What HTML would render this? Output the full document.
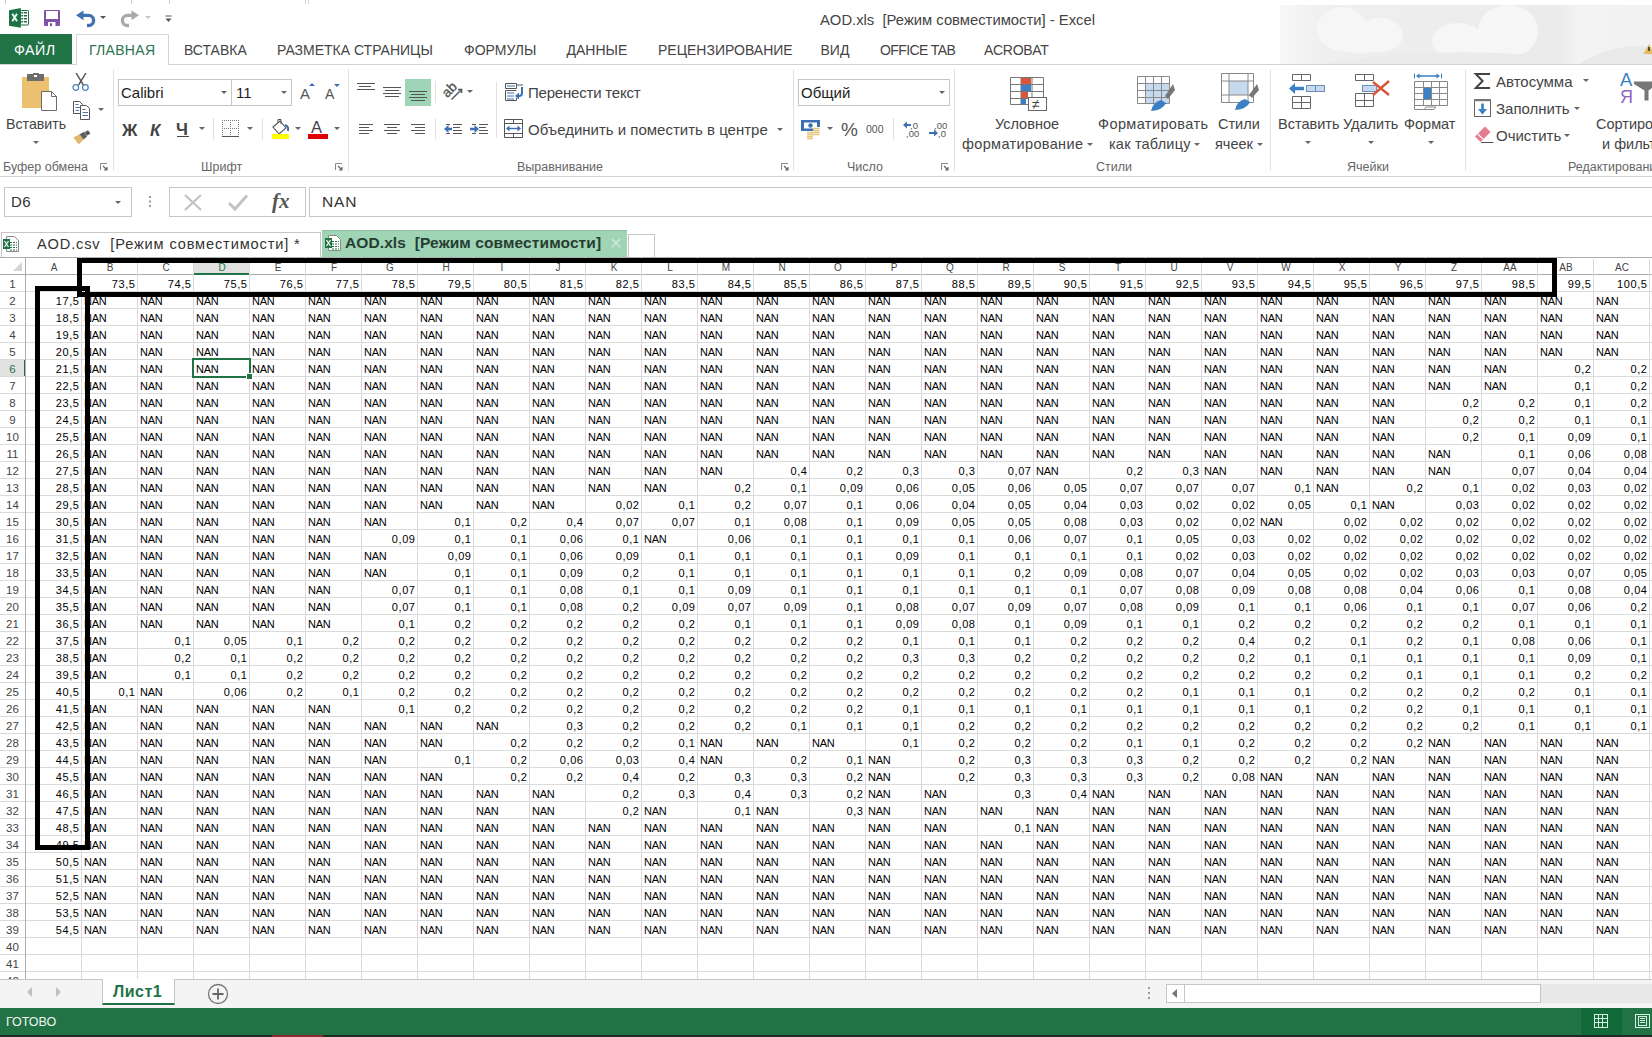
<!DOCTYPE html><html><head><meta charset="utf-8"><style>
*{box-sizing:border-box}
html,body{margin:0;padding:0}
body{width:1652px;height:1037px;overflow:hidden;position:relative;background:#fff;font-family:"Liberation Sans", sans-serif;color:#000}
.a{position:absolute}
.t{position:absolute;white-space:pre;line-height:1}
#grid{position:absolute;left:0;top:257px;width:1652px;height:722px;overflow:hidden;background:#fff}
.hl{position:absolute;left:0;width:1652px;height:1px;background:#dadada}
.vl{position:absolute;top:0;width:1px;background:#dadada}
.c{position:absolute;height:17px;font-size:11px;line-height:19px;white-space:pre}
.n{text-align:right;width:53.6px;letter-spacing:0.6px}
.s{text-align:left;letter-spacing:-0.3px}
.ch{position:absolute;top:2px;height:17px;width:56px;text-align:center;font-size:10px;line-height:17px;color:#444}
.rh{position:absolute;left:0;width:25px;text-align:center;font-size:11.5px;line-height:19px;color:#444}

.lbl{position:absolute;white-space:pre;line-height:1;color:#444;font-size:14.5px}
.glbl{position:absolute;white-space:pre;line-height:1;color:#666;font-size:12.5px}
.tab{position:absolute;white-space:pre;line-height:1;color:#444;font-size:14px;top:43px}
.sep{position:absolute;width:1px;background:#e1e1e1}
.dd{position:absolute;width:0;height:0;border-left:3px solid transparent;border-right:3px solid transparent;border-top:3px solid #666}
.box{position:absolute;border:1px solid #c6c6c6;background:#fff}
svg{position:absolute;overflow:visible}
</style></head><body>
<svg style="left:1280px;top:5px" width="372" height="59">
<defs><linearGradient id="pg" x1="0" x2="1"><stop offset="0" stop-color="#f7f7f7"/><stop offset="0.12" stop-color="#efefef"/><stop offset="0.75" stop-color="#ebebeb"/><stop offset="0.8" stop-color="#f3f3f3"/><stop offset="1" stop-color="#f2f2f2"/></linearGradient></defs>
<rect x="0" y="0" width="372" height="59" fill="url(#pg)"/>
<ellipse cx="62" cy="24" rx="25" ry="22" fill="#f6f6f6"/><ellipse cx="100" cy="30" rx="23" ry="17" fill="#f6f6f6"/><ellipse cx="80" cy="38" rx="30" ry="10" fill="#f6f6f6"/>
<ellipse cx="178" cy="36" rx="26" ry="18" fill="#f6f6f6"/><ellipse cx="228" cy="26" rx="30" ry="26" fill="#f7f7f7"/><ellipse cx="200" cy="44" rx="35" ry="10" fill="#f6f6f6"/>
<path d="M40 59 Q150 40 280 52 L280 59Z" fill="#ebebeb"/>
<path d="M300 59 Q330 38 372 42 L372 59Z" fill="#e9e9e9"/>
</svg>
<div class="a" style="left:5px;top:0;width:1px;height:4px;background:#d0d0d0"></div><div class="a" style="left:131px;top:0;width:1px;height:4px;background:#d0d0d0"></div><div class="a" style="left:169px;top:0;width:1px;height:4px;background:#d0d0d0"></div><div class="a" style="left:305px;top:0;width:1px;height:4px;background:#d0d0d0"></div><div class="a" style="left:308px;top:0;width:1px;height:4px;background:#d0d0d0"></div>
<svg style="left:1643px;top:43px" width="12" height="12"><path d="M6 1 L11.5 11 H0.5Z" fill="#e8b85c"/><rect x="5.2" y="4" width="1.6" height="4" fill="#333"/></svg>
<svg style="left:9px;top:8px" width="21" height="21">
<rect x="11.5" y="2.5" width="8" height="14.5" rx="0.8" fill="#fff" stroke="#1e6b40" stroke-width="1"/>
<g fill="#1e6b40"><rect x="12.3" y="4" width="1.7" height="1.5"/><rect x="14.8" y="4" width="3.2" height="1.5"/>
<rect x="12.3" y="7" width="1.7" height="1.5"/><rect x="14.8" y="7" width="3.2" height="1.5"/>
<rect x="12.3" y="10" width="1.7" height="1.5"/><rect x="14.8" y="10" width="3.2" height="1.5"/>
<rect x="12.3" y="13" width="1.7" height="1.5"/><rect x="14.8" y="13" width="3.2" height="1.5"/></g>
<path d="M0 2.2 L11.8 0 V19.8 L0 17.8Z" fill="#1e7145"/>
<path d="M3.3 5.8 L8 13.3 M8 5.8 L3.3 13.3" stroke="#e8f8ee" stroke-width="2"/>
</svg>
<svg style="left:44px;top:10px" width="16" height="16">
<rect x="0" y="0" width="16" height="16" rx="1.2" fill="#8150a8"/>
<rect x="2" y="1" width="12" height="8" fill="#fff"/>
<rect x="4" y="12" width="7.5" height="4" rx="0.5" fill="#fff"/><rect x="6" y="13.2" width="2" height="3" fill="#8150a8"/>
</svg>
<svg style="left:76px;top:10px" width="20" height="18">
<path d="M6 5.3 H12.5 A5 5 0 0 1 12.5 15.5 H11" fill="none" stroke="#3f72b0" stroke-width="3.3"/>
<path d="M0 5.3 L7.5 0.5 V10.3Z" fill="#3f72b0"/>
</svg>
<div class="dd" style="left:100px;top:16px;border-top-color:#555"></div>
<svg style="left:121px;top:10px" width="20" height="18">
<path d="M12 5.3 H6.5 A5 5 0 0 0 6.5 15.5 H8" fill="none" stroke="#a9a9a9" stroke-width="3.3"/>
<path d="M18 5.3 L10.5 0.5 V10.3Z" fill="#a9a9a9"/>
</svg>
<div class="dd" style="left:145px;top:16px;border-top-color:#c4c4c4"></div>
<svg style="left:165px;top:15px" width="7" height="8"><path d="M0.5 1H6.5" stroke="#555" stroke-width="1"/><path d="M0.5 3.5 L6.5 3.5 L3.5 7Z" fill="#555"/></svg>
<div class="lbl" style="left:820px;top:13px;font-size:14.8px;color:#444">AOD.xls  [Режим совместимости] - Excel</div>
<div class="a" style="left:0;top:34px;width:72px;height:31px;background:#217346"></div>
<div class="tab" style="left:14px;color:#fff;font-size:14.3px;letter-spacing:0.5px">ФАЙЛ</div>
<div class="a" style="left:0;top:64px;width:1652px;height:1px;background:#d4d4d4"></div>
<div class="a" style="left:76px;top:34px;width:93px;height:31px;background:#fff;border:1px solid #d4d4d4;border-bottom:none"></div>
<div class="tab" style="left:89px;color:#2b7450;letter-spacing:0.3px">ГЛАВНАЯ</div>
<div class="tab" style="left:184px">ВСТАВКА</div>
<div class="tab" style="left:277px">РАЗМЕТКА СТРАНИЦЫ</div>
<div class="tab" style="left:464px">ФОРМУЛЫ</div>
<div class="tab" style="left:566.5px">ДАННЫЕ</div>
<div class="tab" style="left:658px">РЕЦЕНЗИРОВАНИЕ</div>
<div class="tab" style="left:820.5px">ВИД</div>
<div class="tab" style="left:880px;color:#444;letter-spacing:-0.6px">OFFICE TAB</div>
<div class="tab" style="left:984px;color:#444;letter-spacing:-0.3px">ACROBAT</div>
<div class="a" style="left:0;top:176px;width:1652px;height:1px;background:#d4d4d4"></div>
<div class="sep" style="left:113px;top:69px;height:102px"></div>
<div class="sep" style="left:348px;top:69px;height:102px"></div>
<div class="sep" style="left:496px;top:82px;height:56px"></div>
<div class="sep" style="left:793px;top:69px;height:102px"></div>
<div class="sep" style="left:954px;top:69px;height:102px"></div>
<div class="sep" style="left:1270px;top:69px;height:102px"></div>
<div class="sep" style="left:1465px;top:69px;height:102px"></div>
<div class="sep" style="left:213px;top:118px;height:22px"></div>
<div class="sep" style="left:262px;top:118px;height:22px"></div>
<div class="sep" style="left:435px;top:81px;height:22px"></div>
<div class="sep" style="left:435px;top:118px;height:21px"></div>
<div class="sep" style="left:893px;top:118px;height:22px"></div>
<svg style="left:22px;top:73px" width="36" height="38">
<rect x="0" y="4" width="27" height="31" fill="#ebc170"/>
<rect x="5" y="1" width="17" height="7" fill="#6d6d6d"/><rect x="11" y="0" width="6" height="3" fill="#6d6d6d"/><rect x="12" y="2" width="3" height="2" fill="#fff"/>
<path d="M19.5 18.5 H29.5 L34.5 23.5 V37.5 H19.5Z" fill="#fff" stroke="#6d6d6d"/>
<path d="M29.5 18.5 V23.5 H34.5" fill="none" stroke="#6d6d6d"/>
</svg>
<div class="lbl" style="left:6px;top:117px;font-size:14.2px">Вставить</div>
<div class="dd" style="left:33px;top:141px;border-top-color:#666"></div>
<svg style="left:72px;top:73px" width="18" height="19">
<path d="M3.3 0 L5 0 L12 11.6 L10.8 12.6Z" fill="#5a5a5a"/><path d="M14.7 0 L13 0 L6 11.6 L7.2 12.6Z" fill="#5a5a5a"/>
<circle cx="3.8" cy="14.5" r="2.8" fill="#fff" stroke="#4a7ebb" stroke-width="1.2"/>
<circle cx="13.4" cy="14.5" r="2.8" fill="#fff" stroke="#4a7ebb" stroke-width="1.2"/>
</svg>
<svg style="left:73px;top:101px" width="18" height="19">
<path d="M0.5 0.5 H6.5 L9.5 3.5 V12.5 H0.5Z" fill="#fff" stroke="#555"/>
<path d="M2.5 3.5H5.5 M2.5 6.5H7.5 M2.5 9.5H6" stroke="#4f74a6" stroke-width="1"/>
<path d="M7.5 4.5 H13.5 L16.5 7.5 V18.5 H7.5Z" fill="#fff" stroke="#555"/>
<path d="M9.5 8.5H12.5 M9.5 11.5H15 M9.5 14.5H15" stroke="#4f74a6" stroke-width="1"/>
</svg>
<div class="dd" style="left:98px;top:108px;border-top-color:#666"></div>
<svg style="left:73px;top:130px" width="19" height="16">
<path d="M0.3 7.4 L6.5 4.2 L10.6 9.6 L5.8 14.6Z" fill="#e2b66e"/>
<path d="M6.5 4.2 L11.3 1.8 L14 6.6 L10.6 9.6Z" fill="#606060"/>
<path d="M11.8 2.2 L15 0.3 L17.4 3.6 L14 5.8Z" fill="#555"/>
</svg>
<div class="glbl" style="left:3px;top:161px">Буфер обмена</div>
<svg style="left:100px;top:163px" width="8" height="8"><path d="M0.5 7 V0.5 H7" fill="none" stroke="#888" stroke-width="1"/><path d="M3 3 L7 7 M7 4 V7 H4" fill="none" stroke="#666" stroke-width="1.2"/></svg>
<div class="box" style="left:118px;top:79px;width:114px;height:27px"></div>
<div class="box" style="left:231px;top:79px;width:61px;height:27px"></div>
<div class="lbl" style="left:121px;top:85px;font-size:15px;color:#222">Calibri</div>
<div class="lbl" style="left:236px;top:85px;font-size:15px;color:#222">11</div>
<div class="dd" style="left:221px;top:91px;border-top-color:#666"></div>
<div class="dd" style="left:281px;top:91px;border-top-color:#666"></div>
<div class="lbl" style="left:300px;top:86px;font-size:15px;color:#555">A</div>
<svg style="left:309px;top:83px" width="6" height="4"><path d="M0 3 L3 0 L6 3Z" fill="#3d6fb4"/></svg>
<div class="lbl" style="left:325px;top:87px;font-size:14px;color:#555">A</div>
<svg style="left:334px;top:84px" width="6" height="4"><path d="M0 0 L3 3 L6 0Z" fill="#3d6fb4"/></svg>
<div class="lbl" style="left:122px;top:122px;font-size:17px;font-weight:bold;color:#444">Ж</div>
<div class="lbl" style="left:150px;top:122px;font-size:17px;font-weight:bold;font-style:italic;color:#444">К</div>
<div class="lbl" style="left:176px;top:121px;font-size:17px;font-weight:bold;color:#444">Ч</div>
<div class="a" style="left:177px;top:136px;width:12px;height:1px;background:#444"></div>
<div class="dd" style="left:199px;top:127px;border-top-color:#666"></div>
<svg style="left:222px;top:120px" width="18" height="17"><g fill="#777"><rect x="0" y="0" width="1" height="1"/><rect x="0" y="8" width="1" height="1"/><rect x="2" y="0" width="1" height="1"/><rect x="2" y="8" width="1" height="1"/><rect x="4" y="0" width="1" height="1"/><rect x="4" y="8" width="1" height="1"/><rect x="6" y="0" width="1" height="1"/><rect x="6" y="8" width="1" height="1"/><rect x="8" y="0" width="1" height="1"/><rect x="8" y="8" width="1" height="1"/><rect x="10" y="0" width="1" height="1"/><rect x="10" y="8" width="1" height="1"/><rect x="12" y="0" width="1" height="1"/><rect x="12" y="8" width="1" height="1"/><rect x="14" y="0" width="1" height="1"/><rect x="14" y="8" width="1" height="1"/><rect x="16" y="0" width="1" height="1"/><rect x="16" y="8" width="1" height="1"/><rect x="0" y="0" width="1" height="1"/><rect x="8" y="0" width="1" height="1"/><rect x="16" y="0" width="1" height="1"/><rect x="0" y="2" width="1" height="1"/><rect x="8" y="2" width="1" height="1"/><rect x="16" y="2" width="1" height="1"/><rect x="0" y="4" width="1" height="1"/><rect x="8" y="4" width="1" height="1"/><rect x="16" y="4" width="1" height="1"/><rect x="0" y="6" width="1" height="1"/><rect x="8" y="6" width="1" height="1"/><rect x="16" y="6" width="1" height="1"/><rect x="0" y="8" width="1" height="1"/><rect x="8" y="8" width="1" height="1"/><rect x="16" y="8" width="1" height="1"/><rect x="0" y="10" width="1" height="1"/><rect x="8" y="10" width="1" height="1"/><rect x="16" y="10" width="1" height="1"/><rect x="0" y="12" width="1" height="1"/><rect x="8" y="12" width="1" height="1"/><rect x="16" y="12" width="1" height="1"/><rect x="0" y="14" width="1" height="1"/><rect x="8" y="14" width="1" height="1"/><rect x="16" y="14" width="1" height="1"/></g><rect x="0" y="16" width="17" height="1" fill="#555"/></svg>
<div class="dd" style="left:247px;top:127px;border-top-color:#666"></div>
<svg style="left:272px;top:119px" width="18" height="20">
<path d="M1 8 L8 2 L14 9 L7 15Z" fill="#fff" stroke="#555" stroke-width="1.1"/>
<path d="M6 4 V0.5 H9 V5" fill="none" stroke="#555" stroke-width="1"/>
<path d="M13 6 Q17 7 16 12" fill="none" stroke="#3d6fb4" stroke-width="2"/>
<rect x="0" y="15" width="17" height="5" fill="#ffff00"/>
</svg>
<div class="dd" style="left:295px;top:127px;border-top-color:#666"></div>
<div class="lbl" style="left:311px;top:119px;font-size:16.5px;color:#444">A</div>
<div class="a" style="left:308px;top:134px;width:20px;height:5px;background:#e00000"></div>
<div class="dd" style="left:334px;top:127px;border-top-color:#666"></div>
<div class="glbl" style="left:201px;top:161px">Шрифт</div>
<svg style="left:335px;top:163px" width="8" height="8"><path d="M0.5 7 V0.5 H7" fill="none" stroke="#888" stroke-width="1"/><path d="M3 3 L7 7 M7 4 V7 H4" fill="none" stroke="#666" stroke-width="1.2"/></svg>
<svg style="left:357px;top:83px" width="22" height="20"><rect x="0" y="0" width="18" height="1" fill="#555"/><rect x="2" y="3" width="12" height="1" fill="#555"/><rect x="0" y="6" width="18" height="1" fill="#555"/></svg>
<svg style="left:383px;top:87px" width="22" height="20"><rect x="0" y="0" width="18" height="1" fill="#555"/><rect x="2" y="3" width="14" height="1" fill="#555"/><rect x="0" y="6" width="18" height="1" fill="#555"/><rect x="2" y="9" width="14" height="1" fill="#555"/></svg>
<div class="a" style="left:405px;top:79px;width:26px;height:27px;background:#9fd5b7"></div>
<svg style="left:409px;top:91px" width="22" height="20"><rect x="0" y="0" width="18" height="1" fill="#555"/><rect x="2" y="3" width="14" height="1" fill="#555"/><rect x="0" y="6" width="18" height="1" fill="#555"/><rect x="2" y="9" width="14" height="1" fill="#555"/></svg>
<svg style="left:440px;top:80px" width="26" height="22">
<text x="2" y="14.5" transform="rotate(-45 9 10)" font-family="Liberation Sans" font-size="13.5" fill="#555" stroke="#555" stroke-width="0.35">ab</text>
<path d="M11.5 19.5 L21 10" fill="none" stroke="#555" stroke-width="1.5"/>
<path d="M18 9.5 H21.5 V13" fill="none" stroke="#555" stroke-width="1.6"/>
</svg>
<div class="dd" style="left:467px;top:90px;border-top-color:#666"></div>
<svg style="left:359px;top:124px" width="22" height="20"><rect x="0" y="0" width="14" height="1" fill="#555"/><rect x="0" y="3" width="10" height="1" fill="#555"/><rect x="0" y="6" width="14" height="1" fill="#555"/><rect x="0" y="9" width="10" height="1" fill="#555"/></svg>
<svg style="left:384px;top:124px" width="22" height="20"><rect x="0" y="0" width="16" height="1" fill="#555"/><rect x="3" y="3" width="10" height="1" fill="#555"/><rect x="0" y="6" width="16" height="1" fill="#555"/><rect x="3" y="9" width="10" height="1" fill="#555"/></svg>
<svg style="left:411px;top:124px" width="22" height="20"><rect x="0" y="0" width="14" height="1" fill="#555"/><rect x="4" y="3" width="10" height="1" fill="#555"/><rect x="0" y="6" width="14" height="1" fill="#555"/><rect x="4" y="9" width="10" height="1" fill="#555"/></svg>
<svg style="left:444px;top:123px" width="20" height="12">
<path d="M2 1.5H6 M9 1.5H18 M9 4.5H16 M9 7.5H18 M2 10.5H6 M9 10.5H18" stroke="#555" stroke-width="1"/>
<path d="M0 6 L4.5 2 V4.8 H8 V7.2 H4.5 V10Z" fill="#3d6fb4"/>
</svg>
<svg style="left:470px;top:123px" width="20" height="12">
<path d="M2 1.5H6 M9 1.5H18 M9 4.5H16 M9 7.5H18 M2 10.5H6 M9 10.5H18" stroke="#555" stroke-width="1"/>
<path d="M9 6 L4.5 2 V4.8 H0 V7.2 H4.5 V10Z" fill="#3d6fb4"/>
</svg>
<svg style="left:505px;top:83px" width="20" height="18">
<path d="M0.5 0.5 H11.5 V5.5 H0.5Z" fill="#fff" stroke="#555"/>
<path d="M11.5 2 H18" stroke="#555"/>
<path d="M0.5 7.5 H11.5 M0.5 7.5 V17.5 H11.5 V15" fill="none" stroke="#555"/>
<path d="M2 3H10 M2 10H9 M2 13H9 M2 16H9" stroke="#3d6fb4"/>
<path d="M17 4 V10 A3 3 0 0 1 14 13 H11" fill="none" stroke="#3d6fb4" stroke-width="2"/>
<path d="M10 13 L14 9.5 V16.5Z" fill="#3d6fb4"/>
</svg>
<div class="lbl" style="left:528px;top:85px;font-size:15px;letter-spacing:-0.2px">Перенести текст</div>
<svg style="left:504px;top:119px" width="20" height="20">
<path d="M0.5 0.5 H18.5 V18.5 H0.5Z M0.5 4.5 H18.5 M0.5 14.5 H18.5 M9.5 0.5 V4.5 M9.5 14.5 V18.5" fill="none" stroke="#555"/>
<path d="M3 9.5 H16" stroke="#3d6fb4" stroke-width="1.4"/>
<path d="M2 9.5 L5.5 6.5 V12.5Z M17 9.5 L13.5 6.5 V12.5Z" fill="#3d6fb4"/>
</svg>
<div class="lbl" style="left:528px;top:122px;font-size:15px">Объединить и поместить в центре</div>
<div class="dd" style="left:777px;top:128px;border-top-color:#666"></div>
<div class="glbl" style="left:517px;top:161px">Выравнивание</div>
<svg style="left:781px;top:163px" width="8" height="8"><path d="M0.5 7 V0.5 H7" fill="none" stroke="#888" stroke-width="1"/><path d="M3 3 L7 7 M7 4 V7 H4" fill="none" stroke="#666" stroke-width="1.2"/></svg>
<div class="box" style="left:798px;top:79px;width:152px;height:27px"></div>
<div class="lbl" style="left:801px;top:85px;font-size:15px;color:#222">Общий</div>
<div class="dd" style="left:939px;top:91px;border-top-color:#666"></div>
<svg style="left:801px;top:120px" width="20" height="19">
<rect x="0" y="0" width="19" height="11" fill="#3d6fb4"/>
<rect x="3" y="2.5" width="13" height="6" fill="#fff"/>
<circle cx="9.5" cy="5.5" r="2.2" fill="#3d6fb4"/>
<rect x="12" y="7" width="7" height="9" fill="#fff"/>
<path d="M12 8.5H18.5 M12 10.5H18.5 M12 12.5H18.5 M12 14.5H18.5" stroke="#e8c580" stroke-width="1.4"/>
<path d="M6 12.5H12 M6 14.5H12 M6 16.5H12 M6 18.5H12" stroke="#e8c580" stroke-width="1.4"/>
</svg>
<div class="dd" style="left:827px;top:127px;border-top-color:#666"></div>
<div class="lbl" style="left:841px;top:120px;font-size:19px;color:#555">%</div>
<div class="lbl" style="left:866px;top:124px;font-size:10.5px;color:#555">000</div>
<svg style="left:903px;top:121px" width="16" height="17">
<text x="7" y="8" font-family="Liberation Sans" font-size="9.5" fill="#555">,0</text>
<text x="3" y="16" font-family="Liberation Sans" font-size="9.5" fill="#555">,00</text>
<path d="M0 4 L4 0.5 V7.5Z" fill="#3d6fb4"/><rect x="3" y="3" width="5" height="2" fill="#3d6fb4"/>
</svg>
<svg style="left:929px;top:121px" width="16" height="17">
<text x="5" y="8" font-family="Liberation Sans" font-size="9.5" fill="#555">,00</text>
<text x="9" y="16" font-family="Liberation Sans" font-size="9.5" fill="#555">,0</text>
<path d="M9 12 L5 8.5 V15.5Z" fill="#3d6fb4"/><rect x="0" y="11" width="5" height="2" fill="#3d6fb4"/>
</svg>
<div class="glbl" style="left:847px;top:161px">Число</div>
<svg style="left:941px;top:163px" width="8" height="8"><path d="M0.5 7 V0.5 H7" fill="none" stroke="#888" stroke-width="1"/><path d="M3 3 L7 7 M7 4 V7 H4" fill="none" stroke="#666" stroke-width="1.2"/></svg>
<svg style="left:1010px;top:77px" width="38" height="34">
<path d="M0.5 0.5H33.5V27.5H0.5Z M0.5 7.5H33.5 M0.5 14.5H33.5 M0.5 21.5H33.5 M11 0.5V27.5 M22 0.5V27.5" fill="none" stroke="#777"/>
<rect x="11" y="1" width="10" height="6" fill="#d9553b"/><rect x="11" y="8" width="10" height="6" fill="#3d7fc4"/>
<rect x="11" y="15" width="7" height="6" fill="#d9553b"/><rect x="11" y="22" width="5" height="5" fill="#3d7fc4"/>
<rect x="18.5" y="20.5" width="18" height="13" fill="#fff" stroke="#666"/>
<text x="22" y="32" font-family="Liberation Sans" font-size="14" fill="#444">≠</text>
</svg>
<div class="lbl" style="left:995px;top:117px">Условное</div>
<div class="lbl" style="left:962px;top:137px;letter-spacing:0.35px">форматирование</div>
<div class="dd" style="left:1087px;top:143px;border-top-color:#666"></div>
<svg style="left:1137px;top:76px" width="38" height="36">
<rect x="8" y="7" width="24" height="20" fill="#c5d9ef"/>
<path d="M0.5 0.5H32.5V27.5H0.5Z M0.5 7.5H32.5 M0.5 14.5H32.5 M0.5 21.5H32.5 M8.5 0.5V27.5 M16.5 0.5V27.5 M24.5 0.5V27.5" fill="none" stroke="#888"/>
<path d="M28 20 L36 8 L38 14 L31 23Z" fill="#777"/>
<path d="M14 35 Q16 26 24 24 L29 27 Q26 34 14 35Z" fill="#3d7fc4"/>
</svg>
<div class="lbl" style="left:1098px;top:117px;letter-spacing:0.4px">Форматировать</div>
<div class="lbl" style="left:1109px;top:137px;letter-spacing:0.2px">как таблицу</div>
<div class="dd" style="left:1194px;top:143px;border-top-color:#666"></div>
<svg style="left:1221px;top:73px" width="38" height="38">
<rect x="8" y="8" width="19" height="14" fill="#c5d9ef"/>
<path d="M0.5 0.5H32.5V29.5H0.5Z M0.5 8H32.5 M0.5 22H32.5 M8 0.5V29.5 M27 0.5V29.5" fill="none" stroke="#888"/>
<path d="M28 22 L36 11 L38 17 L31 25Z" fill="#777"/>
<path d="M14 37 Q16 28 24 26 L29 29 Q26 36 14 37Z" fill="#3d7fc4"/>
</svg>
<div class="lbl" style="left:1218px;top:117px">Стили</div>
<div class="lbl" style="left:1215px;top:137px">ячеек</div>
<div class="dd" style="left:1257px;top:143px;border-top-color:#666"></div>
<div class="glbl" style="left:1096px;top:161px">Стили</div>
<svg style="left:1289px;top:73px" width="37" height="37">
<path d="M3.5 1.5H21.5V7.5H3.5Z M12.5 1.5V7.5 M3.5 23.5H21.5V35.5H3.5Z M3.5 29.5H21.5 M12.5 23.5V35.5" fill="none" stroke="#666"/>
<rect x="17.5" y="12.5" width="18" height="6" fill="#c5d9ef" stroke="#6d8fb8"/><path d="M26.5 12.5V18.5" stroke="#6d8fb8"/>
<path d="M0 15.5 L6 10 V13.8 H15 V17.2 H6 V21Z" fill="#3d7fc4"/>
</svg>
<div class="lbl" style="left:1278px;top:117px">Вставить</div>
<div class="dd" style="left:1305px;top:141px;border-top-color:#666"></div>
<svg style="left:1355px;top:73px" width="36" height="36">
<path d="M0.5 1.5H18.5V7.5H0.5Z M9.5 1.5V7.5 M0.5 20.5H18.5V33.5H0.5Z M0.5 27.5H18.5 M9.5 20.5V33.5" fill="none" stroke="#666"/>
<rect x="7.5" y="12.5" width="14" height="6" fill="#c5d9ef" stroke="#6d8fb8"/>
<path d="M18 9 L34 22 M34 8 L18 22" stroke="#d9553b" stroke-width="2.4"/>
</svg>
<div class="lbl" style="left:1343px;top:117px">Удалить</div>
<div class="dd" style="left:1368px;top:141px;border-top-color:#666"></div>
<svg style="left:1414px;top:73px" width="35" height="38">
<path d="M0.5 0.5V5.5 M27.5 0.5V5.5" stroke="#3d7fc4"/>
<path d="M3 3H25" stroke="#3d7fc4" stroke-width="1.5"/>
<path d="M2 3 L5.5 0.5 V5.5Z M26 3 L22.5 0.5 V5.5Z" fill="#3d7fc4"/>
<path d="M0.5 8.5H33.5V32.5H0.5Z M0.5 14.5H33.5 M0.5 20.5H33.5 M0.5 26.5H33.5 M9.5 8.5V32.5 M17.5 8.5V32.5 M25.5 8.5V32.5" fill="none" stroke="#888"/>
<rect x="10" y="15" width="7" height="11" fill="#3d7fc4"/>
<path d="M0.5 32.5 V36.5 H10 L12 34 H22 L20 36.5 H10" fill="none" stroke="#888"/>
</svg>
<div class="lbl" style="left:1404px;top:117px">Формат</div>
<div class="dd" style="left:1428px;top:141px;border-top-color:#666"></div>
<div class="glbl" style="left:1347px;top:161px">Ячейки</div>
<svg style="left:1475px;top:73px" width="16" height="16"><path d="M15 1 H0.8 L7.6 8 L0.8 15 H15" fill="none" stroke="#444" stroke-width="2" stroke-linejoin="miter"/></svg>
<div class="lbl" style="left:1496px;top:74px;font-size:15px">Автосумма</div>
<div class="dd" style="left:1583px;top:79px;border-top-color:#666"></div>
<svg style="left:1474px;top:99px" width="17" height="18">
<rect x="0.5" y="0.5" width="16" height="17" fill="#fff" stroke="#666"/><rect x="0" y="0" width="17" height="2.2" fill="#777"/>
<path d="M8.5 4.5 V11" stroke="#3d7fc4" stroke-width="2.6"/><path d="M4 10 L8.5 15.5 L13 10Z" fill="#3d7fc4"/>
</svg>
<div class="lbl" style="left:1496px;top:101px;font-size:15px">Заполнить</div>
<div class="dd" style="left:1574px;top:107px;border-top-color:#666"></div>
<svg style="left:1475px;top:126px" width="19" height="17">
<path d="M0 10.5 L10 0.5 L15.5 6 L5.5 16Z" fill="#e57b8e"/><path d="M2.8 8 L8 13.2" stroke="#fff" stroke-width="1.1"/>
<path d="M6 16.5 H18.5" stroke="#555"/>
</svg>
<div class="lbl" style="left:1496px;top:128px;font-size:15px">Очистить</div>
<div class="dd" style="left:1564px;top:134px;border-top-color:#666"></div>
<div class="lbl" style="left:1620px;top:71px;font-size:18.5px;color:#3d7fc4">A</div>
<div class="lbl" style="left:1620px;top:88px;font-size:18px;color:#9565c2">Я</div>
<svg style="left:1634px;top:81px" width="22" height="20"><path d="M0 0.5 H22 V4 L14.5 9.5 V19.5 H10.5 V9.5 L0 3Z" fill="#777"/></svg>
<div class="lbl" style="left:1596px;top:117px">Сортировка</div>
<div class="lbl" style="left:1602px;top:137px">и фильтр</div>
<div class="glbl" style="left:1568px;top:161px">Редактирование</div>
<div class="box" style="left:4px;top:187px;width:128px;height:30px;border-color:#c6c6c6"></div>
<div class="lbl" style="left:11px;top:194px;font-size:15px;color:#333;letter-spacing:0.5px">D6</div>
<div class="dd" style="left:115px;top:201px;border-top-color:#666"></div>
<svg style="left:149px;top:196px" width="3" height="11"><rect x="0" y="0" width="2" height="2" fill="#999"/><rect x="0" y="4.5" width="2" height="2" fill="#999"/><rect x="0" y="9" width="2" height="2" fill="#999"/></svg>
<div class="box" style="left:169px;top:187px;width:137px;height:30px"></div>
<svg style="left:184px;top:194px" width="18" height="17"><path d="M1 1 L17 16 M17 1 L1 16" stroke="#c2c2c2" stroke-width="2.2"/></svg>
<svg style="left:228px;top:194px" width="20" height="17"><path d="M1 9 L7 15 L19 1.5" fill="none" stroke="#c2c2c2" stroke-width="3"/></svg>
<div class="lbl" style="left:272px;top:191px;font-family:'Liberation Serif';font-style:italic;font-weight:bold;font-size:21px;color:#555">fx</div>
<div class="box" style="left:309px;top:187px;width:1350px;height:30px"></div>
<div class="lbl" style="left:322px;top:194px;font-size:15.5px;color:#333;letter-spacing:0.9px">NAN</div>
<div class="a" style="left:1px;top:232px;width:320px;height:26px;background:#fff;border:1px solid #c6c6c6;border-bottom:none"></div>
<svg style="left:3px;top:236px" width="17" height="17">
<path d="M3.5 0.5 H11.5 L15.5 4.5 V15.5 H3.5Z" fill="#fff" stroke="#888"/>
<path d="M7 6.5H14 M7 9H14 M7 11.5H14 M7 14H14" stroke="#217346" stroke-width="1" stroke-dasharray="2 1"/>
<rect x="0" y="3" width="7" height="10" fill="#217346"/>
<path d="M1.5 5 L5.5 11 M5.5 5 L1.5 11" stroke="#fff" stroke-width="1.2"/>
</svg>
<div class="lbl" style="left:37px;top:237px;font-size:14.6px;color:#333;letter-spacing:0.85px">AOD.csv  [Режим совместимости] *</div>
<div class="a" style="left:322px;top:230px;width:305px;height:28px;background:#9fd4b5;border-top:1px solid #8fbfa3"></div>
<svg style="left:325px;top:235px" width="17" height="17">
<path d="M3.5 0.5 H11.5 L15.5 4.5 V15.5 H3.5Z" fill="#fff" stroke="#888"/>
<path d="M7 6.5H14 M7 9H14 M7 11.5H14 M7 14H14" stroke="#217346" stroke-width="1" stroke-dasharray="2 1"/>
<rect x="0" y="3" width="7" height="10" fill="#217346"/>
<path d="M1.5 5 L5.5 11 M5.5 5 L1.5 11" stroke="#fff" stroke-width="1.2"/>
</svg>
<div class="lbl" style="left:345px;top:235px;font-size:15.5px;font-weight:bold;color:#263d32;letter-spacing:0.1px">AOD.xls  [Режим совместимости]</div>
<svg style="left:611px;top:238px" width="10" height="10"><path d="M1 1 L9 9 M9 1 L1 9" stroke="#c8e6d4" stroke-width="2"/></svg>
<div class="a" style="left:628px;top:234px;width:27px;height:24px;background:#fff;border:1px solid #c6c6c6;border-bottom:none"></div>
<div class="a" style="left:0;top:979px;width:1652px;height:29px;background:#f4f4f4;border-top:1px solid #c6c6c6"></div>
<svg style="left:27px;top:987px" width="6" height="10"><path d="M5 0 L0 5 L5 10Z" fill="#c0c0c0"/></svg>
<svg style="left:56px;top:987px" width="6" height="10"><path d="M0 0 L5 5 L0 10Z" fill="#c0c0c0"/></svg>
<div class="a" style="left:102px;top:979px;width:73px;height:26px;background:#fff;border-left:1px solid #c6c6c6;border-right:1px solid #c6c6c6;border-bottom:2px solid #217346"></div>
<div class="lbl" style="left:113px;top:984px;font-size:16px;font-weight:bold;color:#217346;letter-spacing:0.5px">Лист1</div>
<svg style="left:207px;top:983px" width="22" height="22"><circle cx="11" cy="11" r="9.5" fill="none" stroke="#777" stroke-width="1.3"/><path d="M11 5.5V16.5 M5.5 11H16.5" stroke="#666" stroke-width="1.8"/></svg>
<svg style="left:1148px;top:987px" width="3" height="12"><rect x="0" y="0" width="2" height="2" fill="#999"/><rect x="0" y="5" width="2" height="2" fill="#999"/><rect x="0" y="10" width="2" height="2" fill="#999"/></svg>
<div class="a" style="left:1540px;top:984px;width:112px;height:19px;background:#e8e8e8"></div>
<div class="a" style="left:1166px;top:984px;width:375px;height:19px;background:#fff;border:1px solid #c6c6c6"></div>
<div class="a" style="left:1184px;top:985px;width:1px;height:17px;background:#c6c6c6"></div>
<svg style="left:1172px;top:989px" width="6" height="9"><path d="M5 0 L0 4.5 L5 9Z" fill="#777"/></svg>
<div class="a" style="left:0;top:1008px;width:1652px;height:27px;background:#217346"></div>
<div class="lbl" style="left:6px;top:1016px;font-size:12.5px;color:#f4f4f4">ГОТОВО</div>
<div class="a" style="left:1581px;top:1008px;width:41px;height:27px;background:#136a39"></div>
<svg style="left:1594px;top:1014px" width="14" height="14"><g fill="#d4f2e2"><rect x="0" y="0" width="14" height="1"/><rect x="0" y="4" width="14" height="1"/><rect x="0" y="8" width="14" height="1"/><rect x="0" y="13" width="14" height="1"/><rect x="0" y="0" width="1" height="14"/><rect x="4" y="0" width="1" height="14"/><rect x="8" y="0" width="1" height="14"/><rect x="13" y="0" width="1" height="14"/></g></svg>
<svg style="left:1635px;top:1014px" width="15" height="14"><g fill="#d4f2e2"><rect x="0" y="0" width="15" height="1"/><rect x="0" y="13" width="15" height="1"/><rect x="0" y="0" width="1" height="14"/><rect x="14" y="0" width="1" height="14"/><rect x="3" y="2" width="9" height="1"/><rect x="3" y="11" width="9" height="1"/><rect x="3" y="2" width="1" height="10"/><rect x="11" y="2" width="1" height="10"/><rect x="5" y="4" width="5" height="1"/><rect x="5" y="6" width="5" height="1"/><rect x="5" y="8" width="5" height="1"/></g></svg>
<div class="a" style="left:0;top:1035px;width:1652px;height:2px;background:#1e2a24"></div>
<div class="a" style="left:272px;top:1035px;width:51px;height:2px;background:#8a2a2a"></div>
<div id="grid"><div class="hl" style="top:0;background:#ababab"></div><div class="hl" style="top:17px;background:#ababab"></div><div class="a" style="left:194px;top:1px;width:55px;height:16px;background:#e1e1e1"></div><div class="a" style="left:193px;top:16px;width:57px;height:2px;background:#217346"></div><div class="a" style="left:0;top:103px;width:25px;height:16px;background:#e1e1e1"></div><div class="a" style="left:24px;top:102px;width:2px;height:18px;background:#217346"></div><div class="hl" style="top:34px"></div><div class="hl" style="top:51px"></div><div class="hl" style="top:68px"></div><div class="hl" style="top:85px"></div><div class="hl" style="top:102px"></div><div class="hl" style="top:119px"></div><div class="hl" style="top:136px"></div><div class="hl" style="top:153px"></div><div class="hl" style="top:170px"></div><div class="hl" style="top:187px"></div><div class="hl" style="top:204px"></div><div class="hl" style="top:221px"></div><div class="hl" style="top:238px"></div><div class="hl" style="top:255px"></div><div class="hl" style="top:272px"></div><div class="hl" style="top:289px"></div><div class="hl" style="top:306px"></div><div class="hl" style="top:323px"></div><div class="hl" style="top:340px"></div><div class="hl" style="top:357px"></div><div class="hl" style="top:374px"></div><div class="hl" style="top:391px"></div><div class="hl" style="top:408px"></div><div class="hl" style="top:425px"></div><div class="hl" style="top:442px"></div><div class="hl" style="top:459px"></div><div class="hl" style="top:476px"></div><div class="hl" style="top:493px"></div><div class="hl" style="top:510px"></div><div class="hl" style="top:527px"></div><div class="hl" style="top:544px"></div><div class="hl" style="top:561px"></div><div class="hl" style="top:578px"></div><div class="hl" style="top:595px"></div><div class="hl" style="top:612px"></div><div class="hl" style="top:629px"></div><div class="hl" style="top:646px"></div><div class="hl" style="top:663px"></div><div class="hl" style="top:680px"></div><div class="hl" style="top:697px"></div><div class="hl" style="top:714px"></div><div class="vl" style="left:25px;height:722px;background:#ababab"></div><div class="vl" style="left:81px;height:722px"></div><div class="vl" style="left:137px;height:722px"></div><div class="vl" style="left:193px;height:722px"></div><div class="vl" style="left:249px;height:722px"></div><div class="vl" style="left:305px;height:722px"></div><div class="vl" style="left:361px;height:722px"></div><div class="vl" style="left:417px;height:722px"></div><div class="vl" style="left:473px;height:722px"></div><div class="vl" style="left:529px;height:722px"></div><div class="vl" style="left:585px;height:722px"></div><div class="vl" style="left:641px;height:722px"></div><div class="vl" style="left:697px;height:722px"></div><div class="vl" style="left:753px;height:722px"></div><div class="vl" style="left:809px;height:722px"></div><div class="vl" style="left:865px;height:722px"></div><div class="vl" style="left:921px;height:722px"></div><div class="vl" style="left:977px;height:722px"></div><div class="vl" style="left:1033px;height:722px"></div><div class="vl" style="left:1089px;height:722px"></div><div class="vl" style="left:1145px;height:722px"></div><div class="vl" style="left:1201px;height:722px"></div><div class="vl" style="left:1257px;height:722px"></div><div class="vl" style="left:1313px;height:722px"></div><div class="vl" style="left:1369px;height:722px"></div><div class="vl" style="left:1425px;height:722px"></div><div class="vl" style="left:1481px;height:722px"></div><div class="vl" style="left:1537px;height:722px"></div><div class="vl" style="left:1593px;height:722px"></div><div class="vl" style="left:1649px;height:722px"></div><svg class="a" style="left:12px;top:4px" width="12" height="11"><path d="M10 1 L10 10 L1 10 Z" fill="#d4d4d4"/></svg><div class="ch" style="left:26px;color:#444">A</div><div class="ch" style="left:82px;color:#444">B</div><div class="ch" style="left:138px;color:#444">C</div><div class="ch" style="left:194px;color:#217346">D</div><div class="ch" style="left:250px;color:#444">E</div><div class="ch" style="left:306px;color:#444">F</div><div class="ch" style="left:362px;color:#444">G</div><div class="ch" style="left:418px;color:#444">H</div><div class="ch" style="left:474px;color:#444">I</div><div class="ch" style="left:530px;color:#444">J</div><div class="ch" style="left:586px;color:#444">K</div><div class="ch" style="left:642px;color:#444">L</div><div class="ch" style="left:698px;color:#444">M</div><div class="ch" style="left:754px;color:#444">N</div><div class="ch" style="left:810px;color:#444">O</div><div class="ch" style="left:866px;color:#444">P</div><div class="ch" style="left:922px;color:#444">Q</div><div class="ch" style="left:978px;color:#444">R</div><div class="ch" style="left:1034px;color:#444">S</div><div class="ch" style="left:1090px;color:#444">T</div><div class="ch" style="left:1146px;color:#444">U</div><div class="ch" style="left:1202px;color:#444">V</div><div class="ch" style="left:1258px;color:#444">W</div><div class="ch" style="left:1314px;color:#444">X</div><div class="ch" style="left:1370px;color:#444">Y</div><div class="ch" style="left:1426px;color:#444">Z</div><div class="ch" style="left:1482px;color:#444">AA</div><div class="ch" style="left:1538px;color:#444">AB</div><div class="ch" style="left:1594px;color:#444">AC</div><div class="rh" style="top:18px;color:#444">1</div><div class="rh" style="top:35px;color:#444">2</div><div class="rh" style="top:52px;color:#444">3</div><div class="rh" style="top:69px;color:#444">4</div><div class="rh" style="top:86px;color:#444">5</div><div class="rh" style="top:103px;color:#217346">6</div><div class="rh" style="top:120px;color:#444">7</div><div class="rh" style="top:137px;color:#444">8</div><div class="rh" style="top:154px;color:#444">9</div><div class="rh" style="top:171px;color:#444">10</div><div class="rh" style="top:188px;color:#444">11</div><div class="rh" style="top:205px;color:#444">12</div><div class="rh" style="top:222px;color:#444">13</div><div class="rh" style="top:239px;color:#444">14</div><div class="rh" style="top:256px;color:#444">15</div><div class="rh" style="top:273px;color:#444">16</div><div class="rh" style="top:290px;color:#444">17</div><div class="rh" style="top:307px;color:#444">18</div><div class="rh" style="top:324px;color:#444">19</div><div class="rh" style="top:341px;color:#444">20</div><div class="rh" style="top:358px;color:#444">21</div><div class="rh" style="top:375px;color:#444">22</div><div class="rh" style="top:392px;color:#444">23</div><div class="rh" style="top:409px;color:#444">24</div><div class="rh" style="top:426px;color:#444">25</div><div class="rh" style="top:443px;color:#444">26</div><div class="rh" style="top:460px;color:#444">27</div><div class="rh" style="top:477px;color:#444">28</div><div class="rh" style="top:494px;color:#444">29</div><div class="rh" style="top:511px;color:#444">30</div><div class="rh" style="top:528px;color:#444">31</div><div class="rh" style="top:545px;color:#444">32</div><div class="rh" style="top:562px;color:#444">33</div><div class="rh" style="top:579px;color:#444">34</div><div class="rh" style="top:596px;color:#444">35</div><div class="rh" style="top:613px;color:#444">36</div><div class="rh" style="top:630px;color:#444">37</div><div class="rh" style="top:647px;color:#444">38</div><div class="rh" style="top:664px;color:#444">39</div><div class="rh" style="top:681px;color:#444">40</div><div class="rh" style="top:698px;color:#444">41</div><div class="rh" style="top:715px;color:#444">42</div><div class="c n" style="left:82px;top:18px">73,5</div><div class="c n" style="left:138px;top:18px">74,5</div><div class="c n" style="left:194px;top:18px">75,5</div><div class="c n" style="left:250px;top:18px">76,5</div><div class="c n" style="left:306px;top:18px">77,5</div><div class="c n" style="left:362px;top:18px">78,5</div><div class="c n" style="left:418px;top:18px">79,5</div><div class="c n" style="left:474px;top:18px">80,5</div><div class="c n" style="left:530px;top:18px">81,5</div><div class="c n" style="left:586px;top:18px">82,5</div><div class="c n" style="left:642px;top:18px">83,5</div><div class="c n" style="left:698px;top:18px">84,5</div><div class="c n" style="left:754px;top:18px">85,5</div><div class="c n" style="left:810px;top:18px">86,5</div><div class="c n" style="left:866px;top:18px">87,5</div><div class="c n" style="left:922px;top:18px">88,5</div><div class="c n" style="left:978px;top:18px">89,5</div><div class="c n" style="left:1034px;top:18px">90,5</div><div class="c n" style="left:1090px;top:18px">91,5</div><div class="c n" style="left:1146px;top:18px">92,5</div><div class="c n" style="left:1202px;top:18px">93,5</div><div class="c n" style="left:1258px;top:18px">94,5</div><div class="c n" style="left:1314px;top:18px">95,5</div><div class="c n" style="left:1370px;top:18px">96,5</div><div class="c n" style="left:1426px;top:18px">97,5</div><div class="c n" style="left:1482px;top:18px">98,5</div><div class="c n" style="left:1538px;top:18px">99,5</div><div class="c n" style="left:1594px;top:18px">100,5</div><div class="c n" style="left:26px;top:35px">17,5</div><div class="c n" style="left:26px;top:52px">18,5</div><div class="c n" style="left:26px;top:69px">19,5</div><div class="c n" style="left:26px;top:86px">20,5</div><div class="c n" style="left:26px;top:103px">21,5</div><div class="c n" style="left:26px;top:120px">22,5</div><div class="c n" style="left:26px;top:137px">23,5</div><div class="c n" style="left:26px;top:154px">24,5</div><div class="c n" style="left:26px;top:171px">25,5</div><div class="c n" style="left:26px;top:188px">26,5</div><div class="c n" style="left:26px;top:205px">27,5</div><div class="c n" style="left:26px;top:222px">28,5</div><div class="c n" style="left:26px;top:239px">29,5</div><div class="c n" style="left:26px;top:256px">30,5</div><div class="c n" style="left:26px;top:273px">31,5</div><div class="c n" style="left:26px;top:290px">32,5</div><div class="c n" style="left:26px;top:307px">33,5</div><div class="c n" style="left:26px;top:324px">34,5</div><div class="c n" style="left:26px;top:341px">35,5</div><div class="c n" style="left:26px;top:358px">36,5</div><div class="c n" style="left:26px;top:375px">37,5</div><div class="c n" style="left:26px;top:392px">38,5</div><div class="c n" style="left:26px;top:409px">39,5</div><div class="c n" style="left:26px;top:426px">40,5</div><div class="c n" style="left:26px;top:443px">41,5</div><div class="c n" style="left:26px;top:460px">42,5</div><div class="c n" style="left:26px;top:477px">43,5</div><div class="c n" style="left:26px;top:494px">44,5</div><div class="c n" style="left:26px;top:511px">45,5</div><div class="c n" style="left:26px;top:528px">46,5</div><div class="c n" style="left:26px;top:545px">47,5</div><div class="c n" style="left:26px;top:562px">48,5</div><div class="c n" style="left:26px;top:579px">49,5</div><div class="c n" style="left:26px;top:596px">50,5</div><div class="c n" style="left:26px;top:613px">51,5</div><div class="c n" style="left:26px;top:630px">52,5</div><div class="c n" style="left:26px;top:647px">53,5</div><div class="c n" style="left:26px;top:664px">54,5</div><div class="c s" style="left:84px;top:35px">NAN</div><div class="c s" style="left:140px;top:35px">NAN</div><div class="c s" style="left:196px;top:35px">NAN</div><div class="c s" style="left:252px;top:35px">NAN</div><div class="c s" style="left:308px;top:35px">NAN</div><div class="c s" style="left:364px;top:35px">NAN</div><div class="c s" style="left:420px;top:35px">NAN</div><div class="c s" style="left:476px;top:35px">NAN</div><div class="c s" style="left:532px;top:35px">NAN</div><div class="c s" style="left:588px;top:35px">NAN</div><div class="c s" style="left:644px;top:35px">NAN</div><div class="c s" style="left:700px;top:35px">NAN</div><div class="c s" style="left:756px;top:35px">NAN</div><div class="c s" style="left:812px;top:35px">NAN</div><div class="c s" style="left:868px;top:35px">NAN</div><div class="c s" style="left:924px;top:35px">NAN</div><div class="c s" style="left:980px;top:35px">NAN</div><div class="c s" style="left:1036px;top:35px">NAN</div><div class="c s" style="left:1092px;top:35px">NAN</div><div class="c s" style="left:1148px;top:35px">NAN</div><div class="c s" style="left:1204px;top:35px">NAN</div><div class="c s" style="left:1260px;top:35px">NAN</div><div class="c s" style="left:1316px;top:35px">NAN</div><div class="c s" style="left:1372px;top:35px">NAN</div><div class="c s" style="left:1428px;top:35px">NAN</div><div class="c s" style="left:1484px;top:35px">NAN</div><div class="c s" style="left:1540px;top:35px">NAN</div><div class="c s" style="left:1596px;top:35px">NAN</div><div class="c s" style="left:84px;top:52px">NAN</div><div class="c s" style="left:140px;top:52px">NAN</div><div class="c s" style="left:196px;top:52px">NAN</div><div class="c s" style="left:252px;top:52px">NAN</div><div class="c s" style="left:308px;top:52px">NAN</div><div class="c s" style="left:364px;top:52px">NAN</div><div class="c s" style="left:420px;top:52px">NAN</div><div class="c s" style="left:476px;top:52px">NAN</div><div class="c s" style="left:532px;top:52px">NAN</div><div class="c s" style="left:588px;top:52px">NAN</div><div class="c s" style="left:644px;top:52px">NAN</div><div class="c s" style="left:700px;top:52px">NAN</div><div class="c s" style="left:756px;top:52px">NAN</div><div class="c s" style="left:812px;top:52px">NAN</div><div class="c s" style="left:868px;top:52px">NAN</div><div class="c s" style="left:924px;top:52px">NAN</div><div class="c s" style="left:980px;top:52px">NAN</div><div class="c s" style="left:1036px;top:52px">NAN</div><div class="c s" style="left:1092px;top:52px">NAN</div><div class="c s" style="left:1148px;top:52px">NAN</div><div class="c s" style="left:1204px;top:52px">NAN</div><div class="c s" style="left:1260px;top:52px">NAN</div><div class="c s" style="left:1316px;top:52px">NAN</div><div class="c s" style="left:1372px;top:52px">NAN</div><div class="c s" style="left:1428px;top:52px">NAN</div><div class="c s" style="left:1484px;top:52px">NAN</div><div class="c s" style="left:1540px;top:52px">NAN</div><div class="c s" style="left:1596px;top:52px">NAN</div><div class="c s" style="left:84px;top:69px">NAN</div><div class="c s" style="left:140px;top:69px">NAN</div><div class="c s" style="left:196px;top:69px">NAN</div><div class="c s" style="left:252px;top:69px">NAN</div><div class="c s" style="left:308px;top:69px">NAN</div><div class="c s" style="left:364px;top:69px">NAN</div><div class="c s" style="left:420px;top:69px">NAN</div><div class="c s" style="left:476px;top:69px">NAN</div><div class="c s" style="left:532px;top:69px">NAN</div><div class="c s" style="left:588px;top:69px">NAN</div><div class="c s" style="left:644px;top:69px">NAN</div><div class="c s" style="left:700px;top:69px">NAN</div><div class="c s" style="left:756px;top:69px">NAN</div><div class="c s" style="left:812px;top:69px">NAN</div><div class="c s" style="left:868px;top:69px">NAN</div><div class="c s" style="left:924px;top:69px">NAN</div><div class="c s" style="left:980px;top:69px">NAN</div><div class="c s" style="left:1036px;top:69px">NAN</div><div class="c s" style="left:1092px;top:69px">NAN</div><div class="c s" style="left:1148px;top:69px">NAN</div><div class="c s" style="left:1204px;top:69px">NAN</div><div class="c s" style="left:1260px;top:69px">NAN</div><div class="c s" style="left:1316px;top:69px">NAN</div><div class="c s" style="left:1372px;top:69px">NAN</div><div class="c s" style="left:1428px;top:69px">NAN</div><div class="c s" style="left:1484px;top:69px">NAN</div><div class="c s" style="left:1540px;top:69px">NAN</div><div class="c s" style="left:1596px;top:69px">NAN</div><div class="c s" style="left:84px;top:86px">NAN</div><div class="c s" style="left:140px;top:86px">NAN</div><div class="c s" style="left:196px;top:86px">NAN</div><div class="c s" style="left:252px;top:86px">NAN</div><div class="c s" style="left:308px;top:86px">NAN</div><div class="c s" style="left:364px;top:86px">NAN</div><div class="c s" style="left:420px;top:86px">NAN</div><div class="c s" style="left:476px;top:86px">NAN</div><div class="c s" style="left:532px;top:86px">NAN</div><div class="c s" style="left:588px;top:86px">NAN</div><div class="c s" style="left:644px;top:86px">NAN</div><div class="c s" style="left:700px;top:86px">NAN</div><div class="c s" style="left:756px;top:86px">NAN</div><div class="c s" style="left:812px;top:86px">NAN</div><div class="c s" style="left:868px;top:86px">NAN</div><div class="c s" style="left:924px;top:86px">NAN</div><div class="c s" style="left:980px;top:86px">NAN</div><div class="c s" style="left:1036px;top:86px">NAN</div><div class="c s" style="left:1092px;top:86px">NAN</div><div class="c s" style="left:1148px;top:86px">NAN</div><div class="c s" style="left:1204px;top:86px">NAN</div><div class="c s" style="left:1260px;top:86px">NAN</div><div class="c s" style="left:1316px;top:86px">NAN</div><div class="c s" style="left:1372px;top:86px">NAN</div><div class="c s" style="left:1428px;top:86px">NAN</div><div class="c s" style="left:1484px;top:86px">NAN</div><div class="c s" style="left:1540px;top:86px">NAN</div><div class="c s" style="left:1596px;top:86px">NAN</div><div class="c s" style="left:84px;top:103px">NAN</div><div class="c s" style="left:140px;top:103px">NAN</div><div class="c s" style="left:196px;top:103px">NAN</div><div class="c s" style="left:252px;top:103px">NAN</div><div class="c s" style="left:308px;top:103px">NAN</div><div class="c s" style="left:364px;top:103px">NAN</div><div class="c s" style="left:420px;top:103px">NAN</div><div class="c s" style="left:476px;top:103px">NAN</div><div class="c s" style="left:532px;top:103px">NAN</div><div class="c s" style="left:588px;top:103px">NAN</div><div class="c s" style="left:644px;top:103px">NAN</div><div class="c s" style="left:700px;top:103px">NAN</div><div class="c s" style="left:756px;top:103px">NAN</div><div class="c s" style="left:812px;top:103px">NAN</div><div class="c s" style="left:868px;top:103px">NAN</div><div class="c s" style="left:924px;top:103px">NAN</div><div class="c s" style="left:980px;top:103px">NAN</div><div class="c s" style="left:1036px;top:103px">NAN</div><div class="c s" style="left:1092px;top:103px">NAN</div><div class="c s" style="left:1148px;top:103px">NAN</div><div class="c s" style="left:1204px;top:103px">NAN</div><div class="c s" style="left:1260px;top:103px">NAN</div><div class="c s" style="left:1316px;top:103px">NAN</div><div class="c s" style="left:1372px;top:103px">NAN</div><div class="c s" style="left:1428px;top:103px">NAN</div><div class="c s" style="left:1484px;top:103px">NAN</div><div class="c n" style="left:1538px;top:103px">0,2</div><div class="c n" style="left:1594px;top:103px">0,2</div><div class="c s" style="left:84px;top:120px">NAN</div><div class="c s" style="left:140px;top:120px">NAN</div><div class="c s" style="left:196px;top:120px">NAN</div><div class="c s" style="left:252px;top:120px">NAN</div><div class="c s" style="left:308px;top:120px">NAN</div><div class="c s" style="left:364px;top:120px">NAN</div><div class="c s" style="left:420px;top:120px">NAN</div><div class="c s" style="left:476px;top:120px">NAN</div><div class="c s" style="left:532px;top:120px">NAN</div><div class="c s" style="left:588px;top:120px">NAN</div><div class="c s" style="left:644px;top:120px">NAN</div><div class="c s" style="left:700px;top:120px">NAN</div><div class="c s" style="left:756px;top:120px">NAN</div><div class="c s" style="left:812px;top:120px">NAN</div><div class="c s" style="left:868px;top:120px">NAN</div><div class="c s" style="left:924px;top:120px">NAN</div><div class="c s" style="left:980px;top:120px">NAN</div><div class="c s" style="left:1036px;top:120px">NAN</div><div class="c s" style="left:1092px;top:120px">NAN</div><div class="c s" style="left:1148px;top:120px">NAN</div><div class="c s" style="left:1204px;top:120px">NAN</div><div class="c s" style="left:1260px;top:120px">NAN</div><div class="c s" style="left:1316px;top:120px">NAN</div><div class="c s" style="left:1372px;top:120px">NAN</div><div class="c s" style="left:1428px;top:120px">NAN</div><div class="c s" style="left:1484px;top:120px">NAN</div><div class="c n" style="left:1538px;top:120px">0,1</div><div class="c n" style="left:1594px;top:120px">0,2</div><div class="c s" style="left:84px;top:137px">NAN</div><div class="c s" style="left:140px;top:137px">NAN</div><div class="c s" style="left:196px;top:137px">NAN</div><div class="c s" style="left:252px;top:137px">NAN</div><div class="c s" style="left:308px;top:137px">NAN</div><div class="c s" style="left:364px;top:137px">NAN</div><div class="c s" style="left:420px;top:137px">NAN</div><div class="c s" style="left:476px;top:137px">NAN</div><div class="c s" style="left:532px;top:137px">NAN</div><div class="c s" style="left:588px;top:137px">NAN</div><div class="c s" style="left:644px;top:137px">NAN</div><div class="c s" style="left:700px;top:137px">NAN</div><div class="c s" style="left:756px;top:137px">NAN</div><div class="c s" style="left:812px;top:137px">NAN</div><div class="c s" style="left:868px;top:137px">NAN</div><div class="c s" style="left:924px;top:137px">NAN</div><div class="c s" style="left:980px;top:137px">NAN</div><div class="c s" style="left:1036px;top:137px">NAN</div><div class="c s" style="left:1092px;top:137px">NAN</div><div class="c s" style="left:1148px;top:137px">NAN</div><div class="c s" style="left:1204px;top:137px">NAN</div><div class="c s" style="left:1260px;top:137px">NAN</div><div class="c s" style="left:1316px;top:137px">NAN</div><div class="c s" style="left:1372px;top:137px">NAN</div><div class="c n" style="left:1426px;top:137px">0,2</div><div class="c n" style="left:1482px;top:137px">0,2</div><div class="c n" style="left:1538px;top:137px">0,1</div><div class="c n" style="left:1594px;top:137px">0,2</div><div class="c s" style="left:84px;top:154px">NAN</div><div class="c s" style="left:140px;top:154px">NAN</div><div class="c s" style="left:196px;top:154px">NAN</div><div class="c s" style="left:252px;top:154px">NAN</div><div class="c s" style="left:308px;top:154px">NAN</div><div class="c s" style="left:364px;top:154px">NAN</div><div class="c s" style="left:420px;top:154px">NAN</div><div class="c s" style="left:476px;top:154px">NAN</div><div class="c s" style="left:532px;top:154px">NAN</div><div class="c s" style="left:588px;top:154px">NAN</div><div class="c s" style="left:644px;top:154px">NAN</div><div class="c s" style="left:700px;top:154px">NAN</div><div class="c s" style="left:756px;top:154px">NAN</div><div class="c s" style="left:812px;top:154px">NAN</div><div class="c s" style="left:868px;top:154px">NAN</div><div class="c s" style="left:924px;top:154px">NAN</div><div class="c s" style="left:980px;top:154px">NAN</div><div class="c s" style="left:1036px;top:154px">NAN</div><div class="c s" style="left:1092px;top:154px">NAN</div><div class="c s" style="left:1148px;top:154px">NAN</div><div class="c s" style="left:1204px;top:154px">NAN</div><div class="c s" style="left:1260px;top:154px">NAN</div><div class="c s" style="left:1316px;top:154px">NAN</div><div class="c s" style="left:1372px;top:154px">NAN</div><div class="c n" style="left:1426px;top:154px">0,2</div><div class="c n" style="left:1482px;top:154px">0,2</div><div class="c n" style="left:1538px;top:154px">0,1</div><div class="c n" style="left:1594px;top:154px">0,1</div><div class="c s" style="left:84px;top:171px">NAN</div><div class="c s" style="left:140px;top:171px">NAN</div><div class="c s" style="left:196px;top:171px">NAN</div><div class="c s" style="left:252px;top:171px">NAN</div><div class="c s" style="left:308px;top:171px">NAN</div><div class="c s" style="left:364px;top:171px">NAN</div><div class="c s" style="left:420px;top:171px">NAN</div><div class="c s" style="left:476px;top:171px">NAN</div><div class="c s" style="left:532px;top:171px">NAN</div><div class="c s" style="left:588px;top:171px">NAN</div><div class="c s" style="left:644px;top:171px">NAN</div><div class="c s" style="left:700px;top:171px">NAN</div><div class="c s" style="left:756px;top:171px">NAN</div><div class="c s" style="left:812px;top:171px">NAN</div><div class="c s" style="left:868px;top:171px">NAN</div><div class="c s" style="left:924px;top:171px">NAN</div><div class="c s" style="left:980px;top:171px">NAN</div><div class="c s" style="left:1036px;top:171px">NAN</div><div class="c s" style="left:1092px;top:171px">NAN</div><div class="c s" style="left:1148px;top:171px">NAN</div><div class="c s" style="left:1204px;top:171px">NAN</div><div class="c s" style="left:1260px;top:171px">NAN</div><div class="c s" style="left:1316px;top:171px">NAN</div><div class="c s" style="left:1372px;top:171px">NAN</div><div class="c n" style="left:1426px;top:171px">0,2</div><div class="c n" style="left:1482px;top:171px">0,1</div><div class="c n" style="left:1538px;top:171px">0,09</div><div class="c n" style="left:1594px;top:171px">0,1</div><div class="c s" style="left:84px;top:188px">NAN</div><div class="c s" style="left:140px;top:188px">NAN</div><div class="c s" style="left:196px;top:188px">NAN</div><div class="c s" style="left:252px;top:188px">NAN</div><div class="c s" style="left:308px;top:188px">NAN</div><div class="c s" style="left:364px;top:188px">NAN</div><div class="c s" style="left:420px;top:188px">NAN</div><div class="c s" style="left:476px;top:188px">NAN</div><div class="c s" style="left:532px;top:188px">NAN</div><div class="c s" style="left:588px;top:188px">NAN</div><div class="c s" style="left:644px;top:188px">NAN</div><div class="c s" style="left:700px;top:188px">NAN</div><div class="c s" style="left:756px;top:188px">NAN</div><div class="c s" style="left:812px;top:188px">NAN</div><div class="c s" style="left:868px;top:188px">NAN</div><div class="c s" style="left:924px;top:188px">NAN</div><div class="c s" style="left:980px;top:188px">NAN</div><div class="c s" style="left:1036px;top:188px">NAN</div><div class="c s" style="left:1092px;top:188px">NAN</div><div class="c s" style="left:1148px;top:188px">NAN</div><div class="c s" style="left:1204px;top:188px">NAN</div><div class="c s" style="left:1260px;top:188px">NAN</div><div class="c s" style="left:1316px;top:188px">NAN</div><div class="c s" style="left:1372px;top:188px">NAN</div><div class="c s" style="left:1428px;top:188px">NAN</div><div class="c n" style="left:1482px;top:188px">0,1</div><div class="c n" style="left:1538px;top:188px">0,06</div><div class="c n" style="left:1594px;top:188px">0,08</div><div class="c s" style="left:84px;top:205px">NAN</div><div class="c s" style="left:140px;top:205px">NAN</div><div class="c s" style="left:196px;top:205px">NAN</div><div class="c s" style="left:252px;top:205px">NAN</div><div class="c s" style="left:308px;top:205px">NAN</div><div class="c s" style="left:364px;top:205px">NAN</div><div class="c s" style="left:420px;top:205px">NAN</div><div class="c s" style="left:476px;top:205px">NAN</div><div class="c s" style="left:532px;top:205px">NAN</div><div class="c s" style="left:588px;top:205px">NAN</div><div class="c s" style="left:644px;top:205px">NAN</div><div class="c s" style="left:700px;top:205px">NAN</div><div class="c n" style="left:754px;top:205px">0,4</div><div class="c n" style="left:810px;top:205px">0,2</div><div class="c n" style="left:866px;top:205px">0,3</div><div class="c n" style="left:922px;top:205px">0,3</div><div class="c n" style="left:978px;top:205px">0,07</div><div class="c s" style="left:1036px;top:205px">NAN</div><div class="c n" style="left:1090px;top:205px">0,2</div><div class="c n" style="left:1146px;top:205px">0,3</div><div class="c s" style="left:1204px;top:205px">NAN</div><div class="c s" style="left:1260px;top:205px">NAN</div><div class="c s" style="left:1316px;top:205px">NAN</div><div class="c s" style="left:1372px;top:205px">NAN</div><div class="c s" style="left:1428px;top:205px">NAN</div><div class="c n" style="left:1482px;top:205px">0,07</div><div class="c n" style="left:1538px;top:205px">0,04</div><div class="c n" style="left:1594px;top:205px">0,04</div><div class="c s" style="left:84px;top:222px">NAN</div><div class="c s" style="left:140px;top:222px">NAN</div><div class="c s" style="left:196px;top:222px">NAN</div><div class="c s" style="left:252px;top:222px">NAN</div><div class="c s" style="left:308px;top:222px">NAN</div><div class="c s" style="left:364px;top:222px">NAN</div><div class="c s" style="left:420px;top:222px">NAN</div><div class="c s" style="left:476px;top:222px">NAN</div><div class="c s" style="left:532px;top:222px">NAN</div><div class="c s" style="left:588px;top:222px">NAN</div><div class="c s" style="left:644px;top:222px">NAN</div><div class="c n" style="left:698px;top:222px">0,2</div><div class="c n" style="left:754px;top:222px">0,1</div><div class="c n" style="left:810px;top:222px">0,09</div><div class="c n" style="left:866px;top:222px">0,06</div><div class="c n" style="left:922px;top:222px">0,05</div><div class="c n" style="left:978px;top:222px">0,06</div><div class="c n" style="left:1034px;top:222px">0,05</div><div class="c n" style="left:1090px;top:222px">0,07</div><div class="c n" style="left:1146px;top:222px">0,07</div><div class="c n" style="left:1202px;top:222px">0,07</div><div class="c n" style="left:1258px;top:222px">0,1</div><div class="c s" style="left:1316px;top:222px">NAN</div><div class="c n" style="left:1370px;top:222px">0,2</div><div class="c n" style="left:1426px;top:222px">0,1</div><div class="c n" style="left:1482px;top:222px">0,02</div><div class="c n" style="left:1538px;top:222px">0,03</div><div class="c n" style="left:1594px;top:222px">0,02</div><div class="c s" style="left:84px;top:239px">NAN</div><div class="c s" style="left:140px;top:239px">NAN</div><div class="c s" style="left:196px;top:239px">NAN</div><div class="c s" style="left:252px;top:239px">NAN</div><div class="c s" style="left:308px;top:239px">NAN</div><div class="c s" style="left:364px;top:239px">NAN</div><div class="c s" style="left:420px;top:239px">NAN</div><div class="c s" style="left:476px;top:239px">NAN</div><div class="c s" style="left:532px;top:239px">NAN</div><div class="c n" style="left:586px;top:239px">0,02</div><div class="c n" style="left:642px;top:239px">0,1</div><div class="c n" style="left:698px;top:239px">0,2</div><div class="c n" style="left:754px;top:239px">0,07</div><div class="c n" style="left:810px;top:239px">0,1</div><div class="c n" style="left:866px;top:239px">0,06</div><div class="c n" style="left:922px;top:239px">0,04</div><div class="c n" style="left:978px;top:239px">0,05</div><div class="c n" style="left:1034px;top:239px">0,04</div><div class="c n" style="left:1090px;top:239px">0,03</div><div class="c n" style="left:1146px;top:239px">0,02</div><div class="c n" style="left:1202px;top:239px">0,02</div><div class="c n" style="left:1258px;top:239px">0,05</div><div class="c n" style="left:1314px;top:239px">0,1</div><div class="c s" style="left:1372px;top:239px">NAN</div><div class="c n" style="left:1426px;top:239px">0,03</div><div class="c n" style="left:1482px;top:239px">0,02</div><div class="c n" style="left:1538px;top:239px">0,02</div><div class="c n" style="left:1594px;top:239px">0,02</div><div class="c s" style="left:84px;top:256px">NAN</div><div class="c s" style="left:140px;top:256px">NAN</div><div class="c s" style="left:196px;top:256px">NAN</div><div class="c s" style="left:252px;top:256px">NAN</div><div class="c s" style="left:308px;top:256px">NAN</div><div class="c s" style="left:364px;top:256px">NAN</div><div class="c n" style="left:418px;top:256px">0,1</div><div class="c n" style="left:474px;top:256px">0,2</div><div class="c n" style="left:530px;top:256px">0,4</div><div class="c n" style="left:586px;top:256px">0,07</div><div class="c n" style="left:642px;top:256px">0,07</div><div class="c n" style="left:698px;top:256px">0,1</div><div class="c n" style="left:754px;top:256px">0,08</div><div class="c n" style="left:810px;top:256px">0,1</div><div class="c n" style="left:866px;top:256px">0,09</div><div class="c n" style="left:922px;top:256px">0,05</div><div class="c n" style="left:978px;top:256px">0,05</div><div class="c n" style="left:1034px;top:256px">0,08</div><div class="c n" style="left:1090px;top:256px">0,03</div><div class="c n" style="left:1146px;top:256px">0,02</div><div class="c n" style="left:1202px;top:256px">0,02</div><div class="c s" style="left:1260px;top:256px">NAN</div><div class="c n" style="left:1314px;top:256px">0,02</div><div class="c n" style="left:1370px;top:256px">0,02</div><div class="c n" style="left:1426px;top:256px">0,02</div><div class="c n" style="left:1482px;top:256px">0,02</div><div class="c n" style="left:1538px;top:256px">0,02</div><div class="c n" style="left:1594px;top:256px">0,02</div><div class="c s" style="left:84px;top:273px">NAN</div><div class="c s" style="left:140px;top:273px">NAN</div><div class="c s" style="left:196px;top:273px">NAN</div><div class="c s" style="left:252px;top:273px">NAN</div><div class="c s" style="left:308px;top:273px">NAN</div><div class="c n" style="left:362px;top:273px">0,09</div><div class="c n" style="left:418px;top:273px">0,1</div><div class="c n" style="left:474px;top:273px">0,1</div><div class="c n" style="left:530px;top:273px">0,06</div><div class="c n" style="left:586px;top:273px">0,1</div><div class="c s" style="left:644px;top:273px">NAN</div><div class="c n" style="left:698px;top:273px">0,06</div><div class="c n" style="left:754px;top:273px">0,1</div><div class="c n" style="left:810px;top:273px">0,1</div><div class="c n" style="left:866px;top:273px">0,1</div><div class="c n" style="left:922px;top:273px">0,1</div><div class="c n" style="left:978px;top:273px">0,06</div><div class="c n" style="left:1034px;top:273px">0,07</div><div class="c n" style="left:1090px;top:273px">0,1</div><div class="c n" style="left:1146px;top:273px">0,05</div><div class="c n" style="left:1202px;top:273px">0,03</div><div class="c n" style="left:1258px;top:273px">0,02</div><div class="c n" style="left:1314px;top:273px">0,02</div><div class="c n" style="left:1370px;top:273px">0,02</div><div class="c n" style="left:1426px;top:273px">0,02</div><div class="c n" style="left:1482px;top:273px">0,02</div><div class="c n" style="left:1538px;top:273px">0,02</div><div class="c n" style="left:1594px;top:273px">0,02</div><div class="c s" style="left:84px;top:290px">NAN</div><div class="c s" style="left:140px;top:290px">NAN</div><div class="c s" style="left:196px;top:290px">NAN</div><div class="c s" style="left:252px;top:290px">NAN</div><div class="c s" style="left:308px;top:290px">NAN</div><div class="c s" style="left:364px;top:290px">NAN</div><div class="c n" style="left:418px;top:290px">0,09</div><div class="c n" style="left:474px;top:290px">0,1</div><div class="c n" style="left:530px;top:290px">0,06</div><div class="c n" style="left:586px;top:290px">0,09</div><div class="c n" style="left:642px;top:290px">0,1</div><div class="c n" style="left:698px;top:290px">0,1</div><div class="c n" style="left:754px;top:290px">0,1</div><div class="c n" style="left:810px;top:290px">0,1</div><div class="c n" style="left:866px;top:290px">0,09</div><div class="c n" style="left:922px;top:290px">0,1</div><div class="c n" style="left:978px;top:290px">0,1</div><div class="c n" style="left:1034px;top:290px">0,1</div><div class="c n" style="left:1090px;top:290px">0,1</div><div class="c n" style="left:1146px;top:290px">0,02</div><div class="c n" style="left:1202px;top:290px">0,03</div><div class="c n" style="left:1258px;top:290px">0,02</div><div class="c n" style="left:1314px;top:290px">0,02</div><div class="c n" style="left:1370px;top:290px">0,02</div><div class="c n" style="left:1426px;top:290px">0,02</div><div class="c n" style="left:1482px;top:290px">0,02</div><div class="c n" style="left:1538px;top:290px">0,02</div><div class="c n" style="left:1594px;top:290px">0,02</div><div class="c s" style="left:84px;top:307px">NAN</div><div class="c s" style="left:140px;top:307px">NAN</div><div class="c s" style="left:196px;top:307px">NAN</div><div class="c s" style="left:252px;top:307px">NAN</div><div class="c s" style="left:308px;top:307px">NAN</div><div class="c s" style="left:364px;top:307px">NAN</div><div class="c n" style="left:418px;top:307px">0,1</div><div class="c n" style="left:474px;top:307px">0,1</div><div class="c n" style="left:530px;top:307px">0,09</div><div class="c n" style="left:586px;top:307px">0,2</div><div class="c n" style="left:642px;top:307px">0,1</div><div class="c n" style="left:698px;top:307px">0,1</div><div class="c n" style="left:754px;top:307px">0,1</div><div class="c n" style="left:810px;top:307px">0,1</div><div class="c n" style="left:866px;top:307px">0,1</div><div class="c n" style="left:922px;top:307px">0,1</div><div class="c n" style="left:978px;top:307px">0,2</div><div class="c n" style="left:1034px;top:307px">0,09</div><div class="c n" style="left:1090px;top:307px">0,08</div><div class="c n" style="left:1146px;top:307px">0,07</div><div class="c n" style="left:1202px;top:307px">0,04</div><div class="c n" style="left:1258px;top:307px">0,05</div><div class="c n" style="left:1314px;top:307px">0,02</div><div class="c n" style="left:1370px;top:307px">0,02</div><div class="c n" style="left:1426px;top:307px">0,03</div><div class="c n" style="left:1482px;top:307px">0,03</div><div class="c n" style="left:1538px;top:307px">0,07</div><div class="c n" style="left:1594px;top:307px">0,05</div><div class="c s" style="left:84px;top:324px">NAN</div><div class="c s" style="left:140px;top:324px">NAN</div><div class="c s" style="left:196px;top:324px">NAN</div><div class="c s" style="left:252px;top:324px">NAN</div><div class="c s" style="left:308px;top:324px">NAN</div><div class="c n" style="left:362px;top:324px">0,07</div><div class="c n" style="left:418px;top:324px">0,1</div><div class="c n" style="left:474px;top:324px">0,1</div><div class="c n" style="left:530px;top:324px">0,08</div><div class="c n" style="left:586px;top:324px">0,1</div><div class="c n" style="left:642px;top:324px">0,1</div><div class="c n" style="left:698px;top:324px">0,09</div><div class="c n" style="left:754px;top:324px">0,1</div><div class="c n" style="left:810px;top:324px">0,1</div><div class="c n" style="left:866px;top:324px">0,1</div><div class="c n" style="left:922px;top:324px">0,1</div><div class="c n" style="left:978px;top:324px">0,1</div><div class="c n" style="left:1034px;top:324px">0,1</div><div class="c n" style="left:1090px;top:324px">0,07</div><div class="c n" style="left:1146px;top:324px">0,08</div><div class="c n" style="left:1202px;top:324px">0,09</div><div class="c n" style="left:1258px;top:324px">0,08</div><div class="c n" style="left:1314px;top:324px">0,08</div><div class="c n" style="left:1370px;top:324px">0,04</div><div class="c n" style="left:1426px;top:324px">0,06</div><div class="c n" style="left:1482px;top:324px">0,1</div><div class="c n" style="left:1538px;top:324px">0,08</div><div class="c n" style="left:1594px;top:324px">0,04</div><div class="c s" style="left:84px;top:341px">NAN</div><div class="c s" style="left:140px;top:341px">NAN</div><div class="c s" style="left:196px;top:341px">NAN</div><div class="c s" style="left:252px;top:341px">NAN</div><div class="c s" style="left:308px;top:341px">NAN</div><div class="c n" style="left:362px;top:341px">0,07</div><div class="c n" style="left:418px;top:341px">0,1</div><div class="c n" style="left:474px;top:341px">0,1</div><div class="c n" style="left:530px;top:341px">0,08</div><div class="c n" style="left:586px;top:341px">0,2</div><div class="c n" style="left:642px;top:341px">0,09</div><div class="c n" style="left:698px;top:341px">0,07</div><div class="c n" style="left:754px;top:341px">0,09</div><div class="c n" style="left:810px;top:341px">0,1</div><div class="c n" style="left:866px;top:341px">0,08</div><div class="c n" style="left:922px;top:341px">0,07</div><div class="c n" style="left:978px;top:341px">0,09</div><div class="c n" style="left:1034px;top:341px">0,07</div><div class="c n" style="left:1090px;top:341px">0,08</div><div class="c n" style="left:1146px;top:341px">0,09</div><div class="c n" style="left:1202px;top:341px">0,1</div><div class="c n" style="left:1258px;top:341px">0,1</div><div class="c n" style="left:1314px;top:341px">0,06</div><div class="c n" style="left:1370px;top:341px">0,1</div><div class="c n" style="left:1426px;top:341px">0,1</div><div class="c n" style="left:1482px;top:341px">0,07</div><div class="c n" style="left:1538px;top:341px">0,06</div><div class="c n" style="left:1594px;top:341px">0,2</div><div class="c s" style="left:84px;top:358px">NAN</div><div class="c s" style="left:140px;top:358px">NAN</div><div class="c s" style="left:196px;top:358px">NAN</div><div class="c s" style="left:252px;top:358px">NAN</div><div class="c s" style="left:308px;top:358px">NAN</div><div class="c n" style="left:362px;top:358px">0,1</div><div class="c n" style="left:418px;top:358px">0,2</div><div class="c n" style="left:474px;top:358px">0,2</div><div class="c n" style="left:530px;top:358px">0,2</div><div class="c n" style="left:586px;top:358px">0,2</div><div class="c n" style="left:642px;top:358px">0,2</div><div class="c n" style="left:698px;top:358px">0,1</div><div class="c n" style="left:754px;top:358px">0,1</div><div class="c n" style="left:810px;top:358px">0,1</div><div class="c n" style="left:866px;top:358px">0,09</div><div class="c n" style="left:922px;top:358px">0,08</div><div class="c n" style="left:978px;top:358px">0,1</div><div class="c n" style="left:1034px;top:358px">0,09</div><div class="c n" style="left:1090px;top:358px">0,1</div><div class="c n" style="left:1146px;top:358px">0,1</div><div class="c n" style="left:1202px;top:358px">0,2</div><div class="c n" style="left:1258px;top:358px">0,2</div><div class="c n" style="left:1314px;top:358px">0,2</div><div class="c n" style="left:1370px;top:358px">0,2</div><div class="c n" style="left:1426px;top:358px">0,2</div><div class="c n" style="left:1482px;top:358px">0,1</div><div class="c n" style="left:1538px;top:358px">0,1</div><div class="c n" style="left:1594px;top:358px">0,1</div><div class="c s" style="left:84px;top:375px">NAN</div><div class="c n" style="left:138px;top:375px">0,1</div><div class="c n" style="left:194px;top:375px">0,05</div><div class="c n" style="left:250px;top:375px">0,1</div><div class="c n" style="left:306px;top:375px">0,2</div><div class="c n" style="left:362px;top:375px">0,2</div><div class="c n" style="left:418px;top:375px">0,2</div><div class="c n" style="left:474px;top:375px">0,2</div><div class="c n" style="left:530px;top:375px">0,2</div><div class="c n" style="left:586px;top:375px">0,2</div><div class="c n" style="left:642px;top:375px">0,2</div><div class="c n" style="left:698px;top:375px">0,2</div><div class="c n" style="left:754px;top:375px">0,2</div><div class="c n" style="left:810px;top:375px">0,2</div><div class="c n" style="left:866px;top:375px">0,1</div><div class="c n" style="left:922px;top:375px">0,1</div><div class="c n" style="left:978px;top:375px">0,1</div><div class="c n" style="left:1034px;top:375px">0,2</div><div class="c n" style="left:1090px;top:375px">0,2</div><div class="c n" style="left:1146px;top:375px">0,2</div><div class="c n" style="left:1202px;top:375px">0,4</div><div class="c n" style="left:1258px;top:375px">0,2</div><div class="c n" style="left:1314px;top:375px">0,1</div><div class="c n" style="left:1370px;top:375px">0,2</div><div class="c n" style="left:1426px;top:375px">0,1</div><div class="c n" style="left:1482px;top:375px">0,08</div><div class="c n" style="left:1538px;top:375px">0,06</div><div class="c n" style="left:1594px;top:375px">0,1</div><div class="c s" style="left:84px;top:392px">NAN</div><div class="c n" style="left:138px;top:392px">0,2</div><div class="c n" style="left:194px;top:392px">0,1</div><div class="c n" style="left:250px;top:392px">0,2</div><div class="c n" style="left:306px;top:392px">0,2</div><div class="c n" style="left:362px;top:392px">0,2</div><div class="c n" style="left:418px;top:392px">0,2</div><div class="c n" style="left:474px;top:392px">0,2</div><div class="c n" style="left:530px;top:392px">0,2</div><div class="c n" style="left:586px;top:392px">0,2</div><div class="c n" style="left:642px;top:392px">0,2</div><div class="c n" style="left:698px;top:392px">0,2</div><div class="c n" style="left:754px;top:392px">0,2</div><div class="c n" style="left:810px;top:392px">0,2</div><div class="c n" style="left:866px;top:392px">0,3</div><div class="c n" style="left:922px;top:392px">0,3</div><div class="c n" style="left:978px;top:392px">0,2</div><div class="c n" style="left:1034px;top:392px">0,2</div><div class="c n" style="left:1090px;top:392px">0,2</div><div class="c n" style="left:1146px;top:392px">0,2</div><div class="c n" style="left:1202px;top:392px">0,2</div><div class="c n" style="left:1258px;top:392px">0,1</div><div class="c n" style="left:1314px;top:392px">0,1</div><div class="c n" style="left:1370px;top:392px">0,1</div><div class="c n" style="left:1426px;top:392px">0,1</div><div class="c n" style="left:1482px;top:392px">0,1</div><div class="c n" style="left:1538px;top:392px">0,09</div><div class="c n" style="left:1594px;top:392px">0,1</div><div class="c s" style="left:84px;top:409px">NAN</div><div class="c n" style="left:138px;top:409px">0,1</div><div class="c n" style="left:194px;top:409px">0,1</div><div class="c n" style="left:250px;top:409px">0,2</div><div class="c n" style="left:306px;top:409px">0,2</div><div class="c n" style="left:362px;top:409px">0,2</div><div class="c n" style="left:418px;top:409px">0,2</div><div class="c n" style="left:474px;top:409px">0,2</div><div class="c n" style="left:530px;top:409px">0,2</div><div class="c n" style="left:586px;top:409px">0,2</div><div class="c n" style="left:642px;top:409px">0,2</div><div class="c n" style="left:698px;top:409px">0,2</div><div class="c n" style="left:754px;top:409px">0,2</div><div class="c n" style="left:810px;top:409px">0,2</div><div class="c n" style="left:866px;top:409px">0,2</div><div class="c n" style="left:922px;top:409px">0,2</div><div class="c n" style="left:978px;top:409px">0,2</div><div class="c n" style="left:1034px;top:409px">0,2</div><div class="c n" style="left:1090px;top:409px">0,2</div><div class="c n" style="left:1146px;top:409px">0,2</div><div class="c n" style="left:1202px;top:409px">0,2</div><div class="c n" style="left:1258px;top:409px">0,2</div><div class="c n" style="left:1314px;top:409px">0,2</div><div class="c n" style="left:1370px;top:409px">0,1</div><div class="c n" style="left:1426px;top:409px">0,1</div><div class="c n" style="left:1482px;top:409px">0,1</div><div class="c n" style="left:1538px;top:409px">0,2</div><div class="c n" style="left:1594px;top:409px">0,2</div><div class="c n" style="left:82px;top:426px">0,1</div><div class="c s" style="left:140px;top:426px">NAN</div><div class="c n" style="left:194px;top:426px">0,06</div><div class="c n" style="left:250px;top:426px">0,2</div><div class="c n" style="left:306px;top:426px">0,1</div><div class="c n" style="left:362px;top:426px">0,2</div><div class="c n" style="left:418px;top:426px">0,2</div><div class="c n" style="left:474px;top:426px">0,2</div><div class="c n" style="left:530px;top:426px">0,2</div><div class="c n" style="left:586px;top:426px">0,2</div><div class="c n" style="left:642px;top:426px">0,2</div><div class="c n" style="left:698px;top:426px">0,2</div><div class="c n" style="left:754px;top:426px">0,2</div><div class="c n" style="left:810px;top:426px">0,2</div><div class="c n" style="left:866px;top:426px">0,2</div><div class="c n" style="left:922px;top:426px">0,2</div><div class="c n" style="left:978px;top:426px">0,2</div><div class="c n" style="left:1034px;top:426px">0,2</div><div class="c n" style="left:1090px;top:426px">0,2</div><div class="c n" style="left:1146px;top:426px">0,1</div><div class="c n" style="left:1202px;top:426px">0,1</div><div class="c n" style="left:1258px;top:426px">0,1</div><div class="c n" style="left:1314px;top:426px">0,2</div><div class="c n" style="left:1370px;top:426px">0,2</div><div class="c n" style="left:1426px;top:426px">0,2</div><div class="c n" style="left:1482px;top:426px">0,2</div><div class="c n" style="left:1538px;top:426px">0,1</div><div class="c n" style="left:1594px;top:426px">0,1</div><div class="c s" style="left:84px;top:443px">NAN</div><div class="c s" style="left:140px;top:443px">NAN</div><div class="c s" style="left:196px;top:443px">NAN</div><div class="c s" style="left:252px;top:443px">NAN</div><div class="c s" style="left:308px;top:443px">NAN</div><div class="c n" style="left:362px;top:443px">0,1</div><div class="c n" style="left:418px;top:443px">0,2</div><div class="c n" style="left:474px;top:443px">0,2</div><div class="c n" style="left:530px;top:443px">0,2</div><div class="c n" style="left:586px;top:443px">0,2</div><div class="c n" style="left:642px;top:443px">0,2</div><div class="c n" style="left:698px;top:443px">0,2</div><div class="c n" style="left:754px;top:443px">0,2</div><div class="c n" style="left:810px;top:443px">0,2</div><div class="c n" style="left:866px;top:443px">0,1</div><div class="c n" style="left:922px;top:443px">0,1</div><div class="c n" style="left:978px;top:443px">0,1</div><div class="c n" style="left:1034px;top:443px">0,1</div><div class="c n" style="left:1090px;top:443px">0,1</div><div class="c n" style="left:1146px;top:443px">0,1</div><div class="c n" style="left:1202px;top:443px">0,1</div><div class="c n" style="left:1258px;top:443px">0,1</div><div class="c n" style="left:1314px;top:443px">0,2</div><div class="c n" style="left:1370px;top:443px">0,2</div><div class="c n" style="left:1426px;top:443px">0,1</div><div class="c n" style="left:1482px;top:443px">0,1</div><div class="c n" style="left:1538px;top:443px">0,1</div><div class="c n" style="left:1594px;top:443px">0,1</div><div class="c s" style="left:84px;top:460px">NAN</div><div class="c s" style="left:140px;top:460px">NAN</div><div class="c s" style="left:196px;top:460px">NAN</div><div class="c s" style="left:252px;top:460px">NAN</div><div class="c s" style="left:308px;top:460px">NAN</div><div class="c s" style="left:364px;top:460px">NAN</div><div class="c s" style="left:420px;top:460px">NAN</div><div class="c s" style="left:476px;top:460px">NAN</div><div class="c n" style="left:530px;top:460px">0,3</div><div class="c n" style="left:586px;top:460px">0,2</div><div class="c n" style="left:642px;top:460px">0,2</div><div class="c n" style="left:698px;top:460px">0,2</div><div class="c n" style="left:754px;top:460px">0,1</div><div class="c n" style="left:810px;top:460px">0,1</div><div class="c n" style="left:866px;top:460px">0,1</div><div class="c n" style="left:922px;top:460px">0,2</div><div class="c n" style="left:978px;top:460px">0,2</div><div class="c n" style="left:1034px;top:460px">0,2</div><div class="c n" style="left:1090px;top:460px">0,2</div><div class="c n" style="left:1146px;top:460px">0,2</div><div class="c n" style="left:1202px;top:460px">0,2</div><div class="c n" style="left:1258px;top:460px">0,2</div><div class="c n" style="left:1314px;top:460px">0,2</div><div class="c n" style="left:1370px;top:460px">0,2</div><div class="c n" style="left:1426px;top:460px">0,2</div><div class="c n" style="left:1482px;top:460px">0,1</div><div class="c n" style="left:1538px;top:460px">0,1</div><div class="c n" style="left:1594px;top:460px">0,1</div><div class="c s" style="left:84px;top:477px">NAN</div><div class="c s" style="left:140px;top:477px">NAN</div><div class="c s" style="left:196px;top:477px">NAN</div><div class="c s" style="left:252px;top:477px">NAN</div><div class="c s" style="left:308px;top:477px">NAN</div><div class="c s" style="left:364px;top:477px">NAN</div><div class="c s" style="left:420px;top:477px">NAN</div><div class="c n" style="left:474px;top:477px">0,2</div><div class="c n" style="left:530px;top:477px">0,2</div><div class="c n" style="left:586px;top:477px">0,2</div><div class="c n" style="left:642px;top:477px">0,1</div><div class="c s" style="left:700px;top:477px">NAN</div><div class="c s" style="left:756px;top:477px">NAN</div><div class="c s" style="left:812px;top:477px">NAN</div><div class="c n" style="left:866px;top:477px">0,1</div><div class="c n" style="left:922px;top:477px">0,2</div><div class="c n" style="left:978px;top:477px">0,2</div><div class="c n" style="left:1034px;top:477px">0,2</div><div class="c n" style="left:1090px;top:477px">0,1</div><div class="c n" style="left:1146px;top:477px">0,1</div><div class="c n" style="left:1202px;top:477px">0,2</div><div class="c n" style="left:1258px;top:477px">0,2</div><div class="c n" style="left:1314px;top:477px">0,2</div><div class="c n" style="left:1370px;top:477px">0,2</div><div class="c s" style="left:1428px;top:477px">NAN</div><div class="c s" style="left:1484px;top:477px">NAN</div><div class="c s" style="left:1540px;top:477px">NAN</div><div class="c s" style="left:1596px;top:477px">NAN</div><div class="c s" style="left:84px;top:494px">NAN</div><div class="c s" style="left:140px;top:494px">NAN</div><div class="c s" style="left:196px;top:494px">NAN</div><div class="c s" style="left:252px;top:494px">NAN</div><div class="c s" style="left:308px;top:494px">NAN</div><div class="c s" style="left:364px;top:494px">NAN</div><div class="c n" style="left:418px;top:494px">0,1</div><div class="c n" style="left:474px;top:494px">0,2</div><div class="c n" style="left:530px;top:494px">0,06</div><div class="c n" style="left:586px;top:494px">0,03</div><div class="c n" style="left:642px;top:494px">0,4</div><div class="c s" style="left:700px;top:494px">NAN</div><div class="c n" style="left:754px;top:494px">0,2</div><div class="c n" style="left:810px;top:494px">0,1</div><div class="c s" style="left:868px;top:494px">NAN</div><div class="c n" style="left:922px;top:494px">0,2</div><div class="c n" style="left:978px;top:494px">0,3</div><div class="c n" style="left:1034px;top:494px">0,3</div><div class="c n" style="left:1090px;top:494px">0,3</div><div class="c n" style="left:1146px;top:494px">0,2</div><div class="c n" style="left:1202px;top:494px">0,2</div><div class="c n" style="left:1258px;top:494px">0,2</div><div class="c n" style="left:1314px;top:494px">0,2</div><div class="c s" style="left:1372px;top:494px">NAN</div><div class="c s" style="left:1428px;top:494px">NAN</div><div class="c s" style="left:1484px;top:494px">NAN</div><div class="c s" style="left:1540px;top:494px">NAN</div><div class="c s" style="left:1596px;top:494px">NAN</div><div class="c s" style="left:84px;top:511px">NAN</div><div class="c s" style="left:140px;top:511px">NAN</div><div class="c s" style="left:196px;top:511px">NAN</div><div class="c s" style="left:252px;top:511px">NAN</div><div class="c s" style="left:308px;top:511px">NAN</div><div class="c s" style="left:364px;top:511px">NAN</div><div class="c s" style="left:420px;top:511px">NAN</div><div class="c n" style="left:474px;top:511px">0,2</div><div class="c n" style="left:530px;top:511px">0,2</div><div class="c n" style="left:586px;top:511px">0,4</div><div class="c n" style="left:642px;top:511px">0,2</div><div class="c n" style="left:698px;top:511px">0,3</div><div class="c n" style="left:754px;top:511px">0,3</div><div class="c n" style="left:810px;top:511px">0,2</div><div class="c s" style="left:868px;top:511px">NAN</div><div class="c n" style="left:922px;top:511px">0,2</div><div class="c n" style="left:978px;top:511px">0,3</div><div class="c n" style="left:1034px;top:511px">0,3</div><div class="c n" style="left:1090px;top:511px">0,3</div><div class="c n" style="left:1146px;top:511px">0,2</div><div class="c n" style="left:1202px;top:511px">0,08</div><div class="c s" style="left:1260px;top:511px">NAN</div><div class="c s" style="left:1316px;top:511px">NAN</div><div class="c s" style="left:1372px;top:511px">NAN</div><div class="c s" style="left:1428px;top:511px">NAN</div><div class="c s" style="left:1484px;top:511px">NAN</div><div class="c s" style="left:1540px;top:511px">NAN</div><div class="c s" style="left:1596px;top:511px">NAN</div><div class="c s" style="left:84px;top:528px">NAN</div><div class="c s" style="left:140px;top:528px">NAN</div><div class="c s" style="left:196px;top:528px">NAN</div><div class="c s" style="left:252px;top:528px">NAN</div><div class="c s" style="left:308px;top:528px">NAN</div><div class="c s" style="left:364px;top:528px">NAN</div><div class="c s" style="left:420px;top:528px">NAN</div><div class="c s" style="left:476px;top:528px">NAN</div><div class="c s" style="left:532px;top:528px">NAN</div><div class="c n" style="left:586px;top:528px">0,2</div><div class="c n" style="left:642px;top:528px">0,3</div><div class="c n" style="left:698px;top:528px">0,4</div><div class="c n" style="left:754px;top:528px">0,3</div><div class="c n" style="left:810px;top:528px">0,2</div><div class="c s" style="left:868px;top:528px">NAN</div><div class="c s" style="left:924px;top:528px">NAN</div><div class="c n" style="left:978px;top:528px">0,3</div><div class="c n" style="left:1034px;top:528px">0,4</div><div class="c s" style="left:1092px;top:528px">NAN</div><div class="c s" style="left:1148px;top:528px">NAN</div><div class="c s" style="left:1204px;top:528px">NAN</div><div class="c s" style="left:1260px;top:528px">NAN</div><div class="c s" style="left:1316px;top:528px">NAN</div><div class="c s" style="left:1372px;top:528px">NAN</div><div class="c s" style="left:1428px;top:528px">NAN</div><div class="c s" style="left:1484px;top:528px">NAN</div><div class="c s" style="left:1540px;top:528px">NAN</div><div class="c s" style="left:1596px;top:528px">NAN</div><div class="c s" style="left:84px;top:545px">NAN</div><div class="c s" style="left:140px;top:545px">NAN</div><div class="c s" style="left:196px;top:545px">NAN</div><div class="c s" style="left:252px;top:545px">NAN</div><div class="c s" style="left:308px;top:545px">NAN</div><div class="c s" style="left:364px;top:545px">NAN</div><div class="c s" style="left:420px;top:545px">NAN</div><div class="c s" style="left:476px;top:545px">NAN</div><div class="c s" style="left:532px;top:545px">NAN</div><div class="c n" style="left:586px;top:545px">0,2</div><div class="c s" style="left:644px;top:545px">NAN</div><div class="c n" style="left:698px;top:545px">0,1</div><div class="c s" style="left:756px;top:545px">NAN</div><div class="c n" style="left:810px;top:545px">0,3</div><div class="c s" style="left:868px;top:545px">NAN</div><div class="c s" style="left:924px;top:545px">NAN</div><div class="c s" style="left:980px;top:545px">NAN</div><div class="c s" style="left:1036px;top:545px">NAN</div><div class="c s" style="left:1092px;top:545px">NAN</div><div class="c s" style="left:1148px;top:545px">NAN</div><div class="c s" style="left:1204px;top:545px">NAN</div><div class="c s" style="left:1260px;top:545px">NAN</div><div class="c s" style="left:1316px;top:545px">NAN</div><div class="c s" style="left:1372px;top:545px">NAN</div><div class="c s" style="left:1428px;top:545px">NAN</div><div class="c s" style="left:1484px;top:545px">NAN</div><div class="c s" style="left:1540px;top:545px">NAN</div><div class="c s" style="left:1596px;top:545px">NAN</div><div class="c s" style="left:84px;top:562px">NAN</div><div class="c s" style="left:140px;top:562px">NAN</div><div class="c s" style="left:196px;top:562px">NAN</div><div class="c s" style="left:252px;top:562px">NAN</div><div class="c s" style="left:308px;top:562px">NAN</div><div class="c s" style="left:364px;top:562px">NAN</div><div class="c s" style="left:420px;top:562px">NAN</div><div class="c s" style="left:476px;top:562px">NAN</div><div class="c s" style="left:532px;top:562px">NAN</div><div class="c s" style="left:588px;top:562px">NAN</div><div class="c s" style="left:644px;top:562px">NAN</div><div class="c s" style="left:700px;top:562px">NAN</div><div class="c s" style="left:756px;top:562px">NAN</div><div class="c s" style="left:812px;top:562px">NAN</div><div class="c s" style="left:868px;top:562px">NAN</div><div class="c s" style="left:924px;top:562px">NAN</div><div class="c n" style="left:978px;top:562px">0,1</div><div class="c s" style="left:1036px;top:562px">NAN</div><div class="c s" style="left:1092px;top:562px">NAN</div><div class="c s" style="left:1148px;top:562px">NAN</div><div class="c s" style="left:1204px;top:562px">NAN</div><div class="c s" style="left:1260px;top:562px">NAN</div><div class="c s" style="left:1316px;top:562px">NAN</div><div class="c s" style="left:1372px;top:562px">NAN</div><div class="c s" style="left:1428px;top:562px">NAN</div><div class="c s" style="left:1484px;top:562px">NAN</div><div class="c s" style="left:1540px;top:562px">NAN</div><div class="c s" style="left:1596px;top:562px">NAN</div><div class="c s" style="left:84px;top:579px">NAN</div><div class="c s" style="left:140px;top:579px">NAN</div><div class="c s" style="left:196px;top:579px">NAN</div><div class="c s" style="left:252px;top:579px">NAN</div><div class="c s" style="left:308px;top:579px">NAN</div><div class="c s" style="left:364px;top:579px">NAN</div><div class="c s" style="left:420px;top:579px">NAN</div><div class="c s" style="left:476px;top:579px">NAN</div><div class="c s" style="left:532px;top:579px">NAN</div><div class="c s" style="left:588px;top:579px">NAN</div><div class="c s" style="left:644px;top:579px">NAN</div><div class="c s" style="left:700px;top:579px">NAN</div><div class="c s" style="left:756px;top:579px">NAN</div><div class="c s" style="left:812px;top:579px">NAN</div><div class="c s" style="left:868px;top:579px">NAN</div><div class="c s" style="left:924px;top:579px">NAN</div><div class="c s" style="left:980px;top:579px">NAN</div><div class="c s" style="left:1036px;top:579px">NAN</div><div class="c s" style="left:1092px;top:579px">NAN</div><div class="c s" style="left:1148px;top:579px">NAN</div><div class="c s" style="left:1204px;top:579px">NAN</div><div class="c s" style="left:1260px;top:579px">NAN</div><div class="c s" style="left:1316px;top:579px">NAN</div><div class="c s" style="left:1372px;top:579px">NAN</div><div class="c s" style="left:1428px;top:579px">NAN</div><div class="c s" style="left:1484px;top:579px">NAN</div><div class="c s" style="left:1540px;top:579px">NAN</div><div class="c s" style="left:1596px;top:579px">NAN</div><div class="c s" style="left:84px;top:596px">NAN</div><div class="c s" style="left:140px;top:596px">NAN</div><div class="c s" style="left:196px;top:596px">NAN</div><div class="c s" style="left:252px;top:596px">NAN</div><div class="c s" style="left:308px;top:596px">NAN</div><div class="c s" style="left:364px;top:596px">NAN</div><div class="c s" style="left:420px;top:596px">NAN</div><div class="c s" style="left:476px;top:596px">NAN</div><div class="c s" style="left:532px;top:596px">NAN</div><div class="c s" style="left:588px;top:596px">NAN</div><div class="c s" style="left:644px;top:596px">NAN</div><div class="c s" style="left:700px;top:596px">NAN</div><div class="c s" style="left:756px;top:596px">NAN</div><div class="c s" style="left:812px;top:596px">NAN</div><div class="c s" style="left:868px;top:596px">NAN</div><div class="c s" style="left:924px;top:596px">NAN</div><div class="c s" style="left:980px;top:596px">NAN</div><div class="c s" style="left:1036px;top:596px">NAN</div><div class="c s" style="left:1092px;top:596px">NAN</div><div class="c s" style="left:1148px;top:596px">NAN</div><div class="c s" style="left:1204px;top:596px">NAN</div><div class="c s" style="left:1260px;top:596px">NAN</div><div class="c s" style="left:1316px;top:596px">NAN</div><div class="c s" style="left:1372px;top:596px">NAN</div><div class="c s" style="left:1428px;top:596px">NAN</div><div class="c s" style="left:1484px;top:596px">NAN</div><div class="c s" style="left:1540px;top:596px">NAN</div><div class="c s" style="left:1596px;top:596px">NAN</div><div class="c s" style="left:84px;top:613px">NAN</div><div class="c s" style="left:140px;top:613px">NAN</div><div class="c s" style="left:196px;top:613px">NAN</div><div class="c s" style="left:252px;top:613px">NAN</div><div class="c s" style="left:308px;top:613px">NAN</div><div class="c s" style="left:364px;top:613px">NAN</div><div class="c s" style="left:420px;top:613px">NAN</div><div class="c s" style="left:476px;top:613px">NAN</div><div class="c s" style="left:532px;top:613px">NAN</div><div class="c s" style="left:588px;top:613px">NAN</div><div class="c s" style="left:644px;top:613px">NAN</div><div class="c s" style="left:700px;top:613px">NAN</div><div class="c s" style="left:756px;top:613px">NAN</div><div class="c s" style="left:812px;top:613px">NAN</div><div class="c s" style="left:868px;top:613px">NAN</div><div class="c s" style="left:924px;top:613px">NAN</div><div class="c s" style="left:980px;top:613px">NAN</div><div class="c s" style="left:1036px;top:613px">NAN</div><div class="c s" style="left:1092px;top:613px">NAN</div><div class="c s" style="left:1148px;top:613px">NAN</div><div class="c s" style="left:1204px;top:613px">NAN</div><div class="c s" style="left:1260px;top:613px">NAN</div><div class="c s" style="left:1316px;top:613px">NAN</div><div class="c s" style="left:1372px;top:613px">NAN</div><div class="c s" style="left:1428px;top:613px">NAN</div><div class="c s" style="left:1484px;top:613px">NAN</div><div class="c s" style="left:1540px;top:613px">NAN</div><div class="c s" style="left:1596px;top:613px">NAN</div><div class="c s" style="left:84px;top:630px">NAN</div><div class="c s" style="left:140px;top:630px">NAN</div><div class="c s" style="left:196px;top:630px">NAN</div><div class="c s" style="left:252px;top:630px">NAN</div><div class="c s" style="left:308px;top:630px">NAN</div><div class="c s" style="left:364px;top:630px">NAN</div><div class="c s" style="left:420px;top:630px">NAN</div><div class="c s" style="left:476px;top:630px">NAN</div><div class="c s" style="left:532px;top:630px">NAN</div><div class="c s" style="left:588px;top:630px">NAN</div><div class="c s" style="left:644px;top:630px">NAN</div><div class="c s" style="left:700px;top:630px">NAN</div><div class="c s" style="left:756px;top:630px">NAN</div><div class="c s" style="left:812px;top:630px">NAN</div><div class="c s" style="left:868px;top:630px">NAN</div><div class="c s" style="left:924px;top:630px">NAN</div><div class="c s" style="left:980px;top:630px">NAN</div><div class="c s" style="left:1036px;top:630px">NAN</div><div class="c s" style="left:1092px;top:630px">NAN</div><div class="c s" style="left:1148px;top:630px">NAN</div><div class="c s" style="left:1204px;top:630px">NAN</div><div class="c s" style="left:1260px;top:630px">NAN</div><div class="c s" style="left:1316px;top:630px">NAN</div><div class="c s" style="left:1372px;top:630px">NAN</div><div class="c s" style="left:1428px;top:630px">NAN</div><div class="c s" style="left:1484px;top:630px">NAN</div><div class="c s" style="left:1540px;top:630px">NAN</div><div class="c s" style="left:1596px;top:630px">NAN</div><div class="c s" style="left:84px;top:647px">NAN</div><div class="c s" style="left:140px;top:647px">NAN</div><div class="c s" style="left:196px;top:647px">NAN</div><div class="c s" style="left:252px;top:647px">NAN</div><div class="c s" style="left:308px;top:647px">NAN</div><div class="c s" style="left:364px;top:647px">NAN</div><div class="c s" style="left:420px;top:647px">NAN</div><div class="c s" style="left:476px;top:647px">NAN</div><div class="c s" style="left:532px;top:647px">NAN</div><div class="c s" style="left:588px;top:647px">NAN</div><div class="c s" style="left:644px;top:647px">NAN</div><div class="c s" style="left:700px;top:647px">NAN</div><div class="c s" style="left:756px;top:647px">NAN</div><div class="c s" style="left:812px;top:647px">NAN</div><div class="c s" style="left:868px;top:647px">NAN</div><div class="c s" style="left:924px;top:647px">NAN</div><div class="c s" style="left:980px;top:647px">NAN</div><div class="c s" style="left:1036px;top:647px">NAN</div><div class="c s" style="left:1092px;top:647px">NAN</div><div class="c s" style="left:1148px;top:647px">NAN</div><div class="c s" style="left:1204px;top:647px">NAN</div><div class="c s" style="left:1260px;top:647px">NAN</div><div class="c s" style="left:1316px;top:647px">NAN</div><div class="c s" style="left:1372px;top:647px">NAN</div><div class="c s" style="left:1428px;top:647px">NAN</div><div class="c s" style="left:1484px;top:647px">NAN</div><div class="c s" style="left:1540px;top:647px">NAN</div><div class="c s" style="left:1596px;top:647px">NAN</div><div class="c s" style="left:84px;top:664px">NAN</div><div class="c s" style="left:140px;top:664px">NAN</div><div class="c s" style="left:196px;top:664px">NAN</div><div class="c s" style="left:252px;top:664px">NAN</div><div class="c s" style="left:308px;top:664px">NAN</div><div class="c s" style="left:364px;top:664px">NAN</div><div class="c s" style="left:420px;top:664px">NAN</div><div class="c s" style="left:476px;top:664px">NAN</div><div class="c s" style="left:532px;top:664px">NAN</div><div class="c s" style="left:588px;top:664px">NAN</div><div class="c s" style="left:644px;top:664px">NAN</div><div class="c s" style="left:700px;top:664px">NAN</div><div class="c s" style="left:756px;top:664px">NAN</div><div class="c s" style="left:812px;top:664px">NAN</div><div class="c s" style="left:868px;top:664px">NAN</div><div class="c s" style="left:924px;top:664px">NAN</div><div class="c s" style="left:980px;top:664px">NAN</div><div class="c s" style="left:1036px;top:664px">NAN</div><div class="c s" style="left:1092px;top:664px">NAN</div><div class="c s" style="left:1148px;top:664px">NAN</div><div class="c s" style="left:1204px;top:664px">NAN</div><div class="c s" style="left:1260px;top:664px">NAN</div><div class="c s" style="left:1316px;top:664px">NAN</div><div class="c s" style="left:1372px;top:664px">NAN</div><div class="c s" style="left:1428px;top:664px">NAN</div><div class="c s" style="left:1484px;top:664px">NAN</div><div class="c s" style="left:1540px;top:664px">NAN</div><div class="c s" style="left:1596px;top:664px">NAN</div><div class="a" style="left:192px;top:101px;width:59px;height:20px;border:2px solid #217346"></div><div class="a" style="left:246px;top:116px;width:7px;height:7px;background:#217346;border:1px solid #fff"></div><div class="a" style="left:77px;top:1px;width:1480px;height:39px;border:5px solid #000"></div><div class="a" style="left:35px;top:29px;width:55px;height:564px;border:5px solid #000"></div></div>
</body></html>
